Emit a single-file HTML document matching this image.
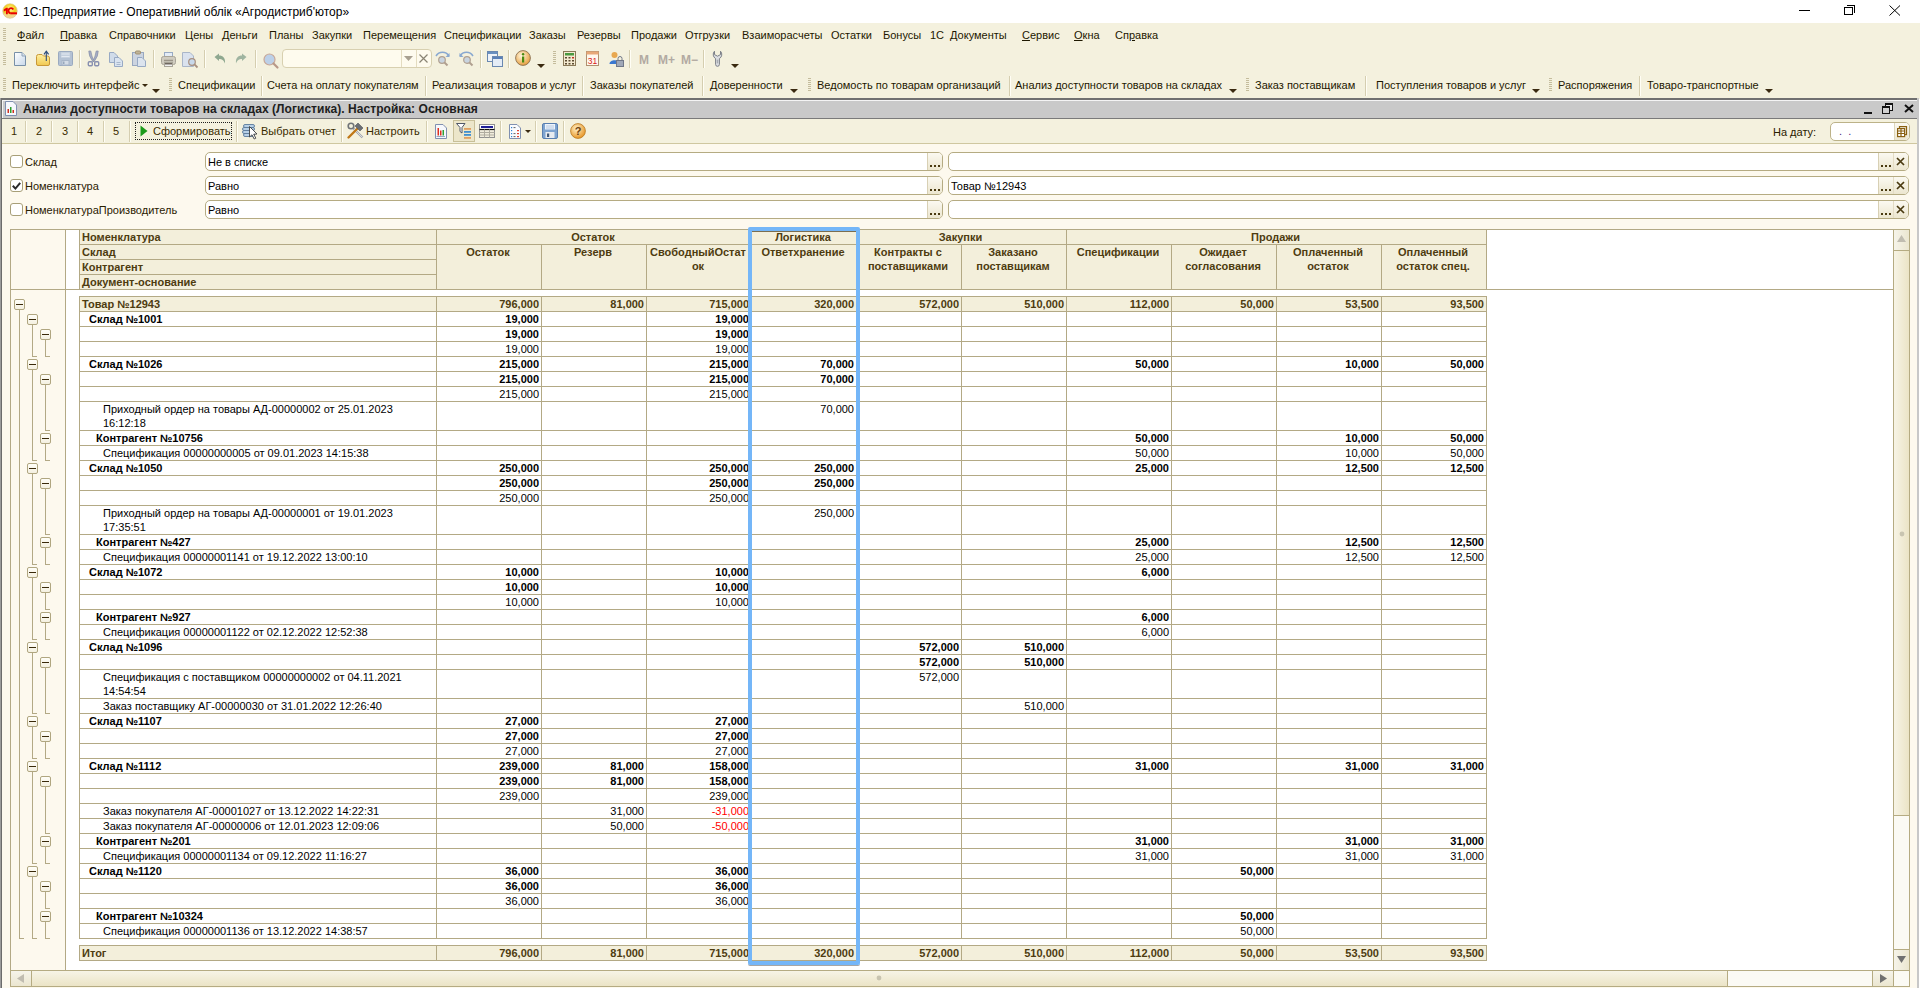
<!DOCTYPE html><html><head><meta charset="utf-8"><style>
html,body{margin:0;padding:0}
body{width:1920px;height:988px;overflow:hidden;position:relative;background:#fff;font-family:'Liberation Sans', sans-serif;}
.t{position:absolute;white-space:pre;font-family:'Liberation Sans', sans-serif;}
.b{position:absolute;box-sizing:border-box;}
svg{position:absolute;overflow:visible}

</style></head><body>
<div class="b" style="left:0px;top:0px;width:1920px;height:23px;background:#fff"></div>
<svg style="left:2px;top:3px" width="16" height="16" viewBox="0 0 16 16"><defs><radialGradient id="g1" cx="50%" cy="35%" r="60%"><stop offset="0" stop-color="#fff9a0"/><stop offset="0.6" stop-color="#f2cc1a"/><stop offset="1" stop-color="#e8c070"/></radialGradient></defs><circle cx="8" cy="8" r="7.3" fill="url(#g1)" stroke="#d8c890" stroke-width="0.6"/><path d="M1.5 10.5 A7 7 0 0 0 14.5 10.5Z" fill="#f4e0b0" opacity="0.6"/><path d="M1.8 6.4 L4.4 4.8 H5.8 V11.2 H4 V7.4 L1.8 8.4Z" fill="#e80000"/><path d="M11.3 6.4 A2.6 2.6 0 1 0 8.8 10.3" stroke="#e80000" stroke-width="1.9" fill="none"/><rect x="8.6" y="9.3" width="6.4" height="2" fill="#e80000"/></svg>
<div class="t" style="left:23px;top:5px;font-size:12px;line-height:15px;color:#000;">1С:Предприятие - Оперативний облік «Агродистриб&#x27;ютор»</div>
<div class="b" style="left:1799px;top:10px;width:11px;height:1px;background:#000"></div>
<div class="b" style="left:1844px;top:7px;width:9px;height:8px;border:1px solid #000;background:#fff"></div>
<div class="b" style="left:1847px;top:5px;width:8px;height:8px;border-top:1px solid #000;border-right:1px solid #000"></div>
<svg style="left:1889px;top:5px" width="12" height="11" viewBox="0 0 12 11"><path d="M0.5 0.5 L11 10.5 M11 0.5 L0.5 10.5" stroke="#000" stroke-width="1" fill="none"/></svg>
<div class="b" style="left:0px;top:23px;width:1920px;height:76px;background:#f4f1de"></div>
<div class="b" style="left:3px;top:28px;width:3px;height:14px;background:repeating-linear-gradient(to bottom,#c4bc9c 0 1px,transparent 1px 2px)"></div>
<div class="t" style="left:17px;top:28px;font-size:11px;line-height:15px;color:#1e1800"><u>Ф</u>айл</div>
<div class="t" style="left:60px;top:28px;font-size:11px;line-height:15px;color:#1e1800"><u>П</u>равка</div>
<div class="t" style="left:109px;top:28px;font-size:11px;line-height:15px;color:#1e1800;">Справочники</div>
<div class="t" style="left:185px;top:28px;font-size:11px;line-height:15px;color:#1e1800;">Цены</div>
<div class="t" style="left:222px;top:28px;font-size:11px;line-height:15px;color:#1e1800"><u>Д</u>еньги</div>
<div class="t" style="left:269px;top:28px;font-size:11px;line-height:15px;color:#1e1800;">Планы</div>
<div class="t" style="left:312px;top:28px;font-size:11px;line-height:15px;color:#1e1800;">Закупки</div>
<div class="t" style="left:363px;top:28px;font-size:11px;line-height:15px;color:#1e1800;">Перемещения</div>
<div class="t" style="left:444px;top:28px;font-size:11px;line-height:15px;color:#1e1800;">Спецификации</div>
<div class="t" style="left:529px;top:28px;font-size:11px;line-height:15px;color:#1e1800;">Заказы</div>
<div class="t" style="left:577px;top:28px;font-size:11px;line-height:15px;color:#1e1800;">Резервы</div>
<div class="t" style="left:631px;top:28px;font-size:11px;line-height:15px;color:#1e1800;">Продажи</div>
<div class="t" style="left:685px;top:28px;font-size:11px;line-height:15px;color:#1e1800;">Отгрузки</div>
<div class="t" style="left:742px;top:28px;font-size:11px;line-height:15px;color:#1e1800;">Взаиморасчеты</div>
<div class="t" style="left:831px;top:28px;font-size:11px;line-height:15px;color:#1e1800;">Остатки</div>
<div class="t" style="left:883px;top:28px;font-size:11px;line-height:15px;color:#1e1800;">Бонусы</div>
<div class="t" style="left:930px;top:28px;font-size:11px;line-height:15px;color:#1e1800;">1С</div>
<div class="t" style="left:950px;top:28px;font-size:11px;line-height:15px;color:#1e1800"><u>Д</u>окументы</div>
<div class="t" style="left:1022px;top:28px;font-size:11px;line-height:15px;color:#1e1800"><u>С</u>ервис</div>
<div class="t" style="left:1074px;top:28px;font-size:11px;line-height:15px;color:#1e1800"><u>О</u>кна</div>
<div class="t" style="left:1115px;top:28px;font-size:11px;line-height:15px;color:#1e1800">Сп<u>р</u>авка</div>
<div class="b" style="left:3px;top:52px;width:3px;height:13px;background:repeating-linear-gradient(to bottom,#c4bc9c 0 1px,transparent 1px 2px)"></div>
<svg style="left:13px;top:51px" width="15" height="16" viewBox="0 0 15 16"><defs><linearGradient id="gd" x1="0" y1="0" x2="1" y2="1"><stop offset="0" stop-color="#ffffff"/><stop offset="1" stop-color="#c8d8ea"/></linearGradient></defs><path d="M1.5 1.5 H9 L12.5 5 V14.5 H1.5Z" fill="url(#gd)" stroke="#7890a8"/><path d="M9 1.5 V5 H12.5" fill="#d8e2ee" stroke="#90a4b8"/></svg>
<svg style="left:35px;top:50px" width="16" height="17" viewBox="0 0 16 17"><defs><linearGradient id="gf" x1="0" y1="0" x2="0" y2="1"><stop offset="0" stop-color="#fff0a0"/><stop offset="1" stop-color="#f0c850"/></linearGradient></defs><path d="M1.5 6.5 Q1.5 4.5 3.5 4.5 H7 L8.5 6 H12.5 Q14.5 6 14.5 8 V14 Q14.5 15.5 13 15.5 H3 Q1.5 15.5 1.5 14Z" fill="url(#gf)" stroke="#c89838"/><path d="M11.3 11 V2" stroke="#2a4a7a" stroke-width="1.1"/><path d="M9 4.3 L11.3 1.2 L13.6 4.3" stroke="#2a4a7a" stroke-width="1.2" fill="none"/></svg>
<svg style="left:57px;top:50px" width="17" height="17" viewBox="0 0 17 17"><rect x="1.5" y="1.5" width="14" height="14" rx="1" fill="#b4c2d4" stroke="#9aaac0"/><rect x="4" y="2" width="9" height="6" fill="#c4d0de"/><path d="M4.5 4 H12.5 M4.5 6.5 H12.5" stroke="#e4eaf2"/><rect x="5" y="10.5" width="7" height="4.5" fill="#d4dce6" stroke="#a8b6c8"/><rect x="6" y="11.5" width="1.5" height="2.5" fill="#98a8bc"/></svg>
<div class="b" style="left:79px;top:50px;width:1px;height:18px;background:#d5ceb0;box-shadow:1px 0 0 #fffef5"></div>
<svg style="left:87px;top:50px" width="13" height="17" viewBox="0 0 13 17"><path d="M1.8 1 Q1.5 6 5.8 11.5 L7.2 11.5 Q4.5 6 3.8 1Z M11.2 1 Q11.5 6 7.2 11.5 L5.8 11.5 Q8.5 6 9.2 1Z" fill="#a4acc4" stroke="#8890a8" stroke-width="0.7"/><rect x="1.3" y="11.8" width="4" height="4" rx="1" fill="none" stroke="#8890b0" stroke-width="1.4"/><rect x="7.7" y="11.8" width="4" height="4" rx="1" fill="none" stroke="#8890b0" stroke-width="1.4"/></svg>
<svg style="left:108px;top:51px" width="17" height="16" viewBox="0 0 17 16"><path d="M1.5 1.5 H6 L9.5 5 V11.5 H1.5Z" fill="#d0dcea" stroke="#98aac4"/><path d="M6.5 6.5 H11 L14.5 10 V15.5 H6.5Z" fill="#dae4f0" stroke="#98aac4"/><path d="M8.5 11.5 H12.5 M8.5 13.5 H12.5" stroke="#a8b8cc"/></svg>
<svg style="left:131px;top:50px" width="17" height="17" viewBox="0 0 17 17"><rect x="1.5" y="2.5" width="11" height="13" fill="#ccd4e0" stroke="#98a8c0"/><rect x="4.5" y="1" width="5" height="3" rx="1" fill="#c0b498" stroke="#a09070"/><path d="M6.5 7.5 H11 L14.5 11 V16.5 H6.5Z" fill="#dce4ee" stroke="#98aac4"/></svg>
<div class="b" style="left:153px;top:50px;width:1px;height:18px;background:#d5ceb0;box-shadow:1px 0 0 #fffef5"></div>
<svg style="left:160px;top:51px" width="17" height="17" viewBox="0 0 17 17"><rect x="4.5" y="1.5" width="8" height="5" fill="#e4ecf6" stroke="#98aac4"/><rect x="1.5" y="5.5" width="14" height="8" rx="2" fill="#d0ccc0" stroke="#a8a498"/><path d="M4 9.5 H13" stroke="#9a9488" stroke-width="1.5"/><rect x="4.5" y="11.5" width="8" height="4" fill="#f0f0f0" stroke="#a8a498"/><rect x="5" y="12" width="7" height="1.5" fill="#706860"/></svg>
<svg style="left:182px;top:52px" width="17" height="16" viewBox="0 0 17 16"><path d="M0.5 0.5 H8 L11.5 4 V14.5 H0.5Z" fill="#dae2ee" stroke="#aab6c8"/><circle cx="10" cy="10" r="3.3" fill="#c8d8ea" stroke="#a89080" stroke-width="1.2"/><path d="M12.2 12.2 L15.5 15.5" stroke="#a89080" stroke-width="1.8"/></svg>
<div class="b" style="left:204px;top:50px;width:1px;height:18px;background:#d5ceb0;box-shadow:1px 0 0 #fffef5"></div>
<svg style="left:214px;top:53px" width="12" height="11" viewBox="0 0 12 11"><path d="M0.5 4 L5 0.5 V2.6 C9 2.6 11.5 5 11 10.5 C9.5 7 8 6 5 6 V8 Z" fill="#8fa890"/></svg>
<svg style="left:235px;top:53px" width="12" height="11" viewBox="0 0 12 11"><path d="M11.5 4 L7 0.5 V2.6 C3 2.6 0.5 5 1 10.5 C2.5 7 4 6 7 6 V8 Z" fill="#9fb4a0"/></svg>
<div class="b" style="left:255px;top:50px;width:1px;height:18px;background:#d5ceb0;box-shadow:1px 0 0 #fffef5"></div>
<svg style="left:263px;top:53px" width="16" height="15" viewBox="0 0 16 15"><circle cx="6.5" cy="6.5" r="5.5" fill="#bcd0e8" stroke="#c8a898" stroke-width="1.2"/><path d="M10.5 10.5 L14.5 14.5" stroke="#b89888" stroke-width="2.2" stroke-linecap="round"/></svg>
<div class="b" style="left:282px;top:49px;width:150px;height:19px;border:1px solid #d8d0b0;border-radius:4px;background:#fefbee"></div>
<div class="b" style="left:401px;top:50px;width:1px;height:17px;background:#e4dcc0"></div>
<div class="b" style="left:416px;top:50px;width:1px;height:17px;background:#e4dcc0"></div>
<svg style="left:404px;top:56px" width="9" height="5" viewBox="0 0 9 5"><path d="M0 0 H9 L4.5 5Z" fill="#a8a090"/></svg>
<svg style="left:419px;top:54px" width="9" height="9" viewBox="0 0 9 9"><path d="M0.5 0.5 L8.5 8.5 M8.5 0.5 L0.5 8.5" stroke="#8a8474" stroke-width="1.2"/></svg>
<svg style="left:435px;top:51px" width="16" height="16" viewBox="0 0 16 16"><path d="M1 5 C4 0 11 0 14 5" stroke="#88a8d0" stroke-width="1.5" fill="none"/><path d="M14.5 2 V6 H10.5" fill="#88a8d0"/><circle cx="7" cy="9" r="3.3" fill="#c8d4e0" stroke="#b0a090" stroke-width="1.2"/><path d="M9.5 11.5 L12.5 14.5" stroke="#b0a090" stroke-width="2"/></svg>
<svg style="left:459px;top:51px" width="16" height="16" viewBox="0 0 16 16"><path d="M1 5 C4 0 11 0 14 5" stroke="#88a8d0" stroke-width="1.5" fill="none"/><path d="M0.5 2 V6 H4.5" fill="#88a8d0"/><circle cx="8" cy="9" r="3.3" fill="#c8d4e0" stroke="#b0a090" stroke-width="1.2"/><path d="M10.5 11.5 L13.5 14.5" stroke="#b0a090" stroke-width="2"/></svg>
<div class="b" style="left:480px;top:50px;width:1px;height:18px;background:#d5ceb0;box-shadow:1px 0 0 #fffef5"></div>
<svg style="left:487px;top:51px" width="16" height="16" viewBox="0 0 16 16"><rect x="0.5" y="0.5" width="10" height="10" fill="#eef2f8" stroke="#6a88b0"/><rect x="1" y="1" width="9" height="2" fill="#6a90c0"/><rect x="5.5" y="5.5" width="10" height="10" fill="#e4ecf6" stroke="#6a88b0"/><rect x="6" y="6" width="9" height="2" fill="#5a80b8"/></svg>
<div class="b" style="left:508px;top:50px;width:1px;height:18px;background:#d5ceb0;box-shadow:1px 0 0 #fffef5"></div>
<svg style="left:515px;top:50px" width="16" height="16" viewBox="0 0 16 16"><defs><radialGradient id="gi" cx="40%" cy="35%" r="65%"><stop offset="0" stop-color="#fff8e0"/><stop offset="1" stop-color="#e8a040"/></radialGradient></defs><circle cx="8" cy="8" r="7.4" fill="url(#gi)" stroke="#8a7050" stroke-width="0.9"/><rect x="7" y="6.5" width="2.2" height="6" fill="#4a8a10"/><circle cx="8.1" cy="4.3" r="1.2" fill="#4a8a10"/></svg>
<svg style="left:537px;top:64px" width="8" height="4" viewBox="0 0 8 4"><path d="M0 0 H8 L4 4Z" fill="#3a2a10"/></svg>
<div class="b" style="left:553px;top:51px;width:3px;height:14px;background:repeating-linear-gradient(to bottom,#c4bc9c 0 1px,transparent 1px 2px)"></div>
<svg style="left:563px;top:51px" width="13" height="15" viewBox="0 0 13 15"><rect x="0.5" y="0.5" width="12" height="14" fill="#f4ead0" stroke="#8a7a58"/><rect x="2" y="2" width="9" height="2.5" fill="#4a9a40"/><g fill="#5a4a30"><rect x="2" y="6" width="2" height="1.5"/><rect x="5.5" y="6" width="2" height="1.5"/><rect x="9" y="6" width="2" height="1.5" fill="#c03020"/><rect x="2" y="9" width="2" height="1.5"/><rect x="5.5" y="9" width="2" height="1.5"/><rect x="9" y="9" width="2" height="1.5"/><rect x="2" y="12" width="2" height="1.5"/><rect x="5.5" y="12" width="2" height="1.5"/><rect x="9" y="12" width="2" height="1.5"/></g></svg>
<svg style="left:586px;top:51px" width="13" height="15" viewBox="0 0 13 15"><rect x="0.5" y="0.5" width="12" height="14" fill="#fff8ee" stroke="#b09070"/><rect x="0.5" y="0.5" width="12" height="3" fill="#e8a878"/><text x="6.5" y="13" font-family="Liberation Sans" font-size="8.5" fill="#d82020" text-anchor="middle">31</text></svg>
<svg style="left:609px;top:51px" width="15" height="16" viewBox="0 0 15 16"><circle cx="5.5" cy="4" r="3" fill="#e8a850"/><path d="M0.5 13 C0.5 8 10.5 8 10.5 13Z" fill="#3a78d0"/><rect x="7.5" y="9.5" width="7" height="6" fill="#a0a8b8" stroke="#707888"/><path d="M9 9.5 V7.5 A2 2 0 0 1 13 7.5 V9.5" stroke="#707888" fill="none"/></svg>
<div class="b" style="left:629px;top:50px;width:1px;height:18px;background:#d5ceb0;box-shadow:1px 0 0 #fffef5"></div>
<div class="t" style="left:639px;top:53px;font-size:12px;line-height:15px;font-weight:bold;color:#b2aaa2;">M</div>
<div class="t" style="left:658px;top:53px;font-size:12px;line-height:15px;font-weight:bold;color:#b2aaa2;">M+</div>
<div class="t" style="left:681px;top:53px;font-size:12px;line-height:15px;font-weight:bold;color:#b2aaa2;">M−</div>
<div class="b" style="left:703px;top:50px;width:1px;height:18px;background:#d5ceb0;box-shadow:1px 0 0 #fffef5"></div>
<svg style="left:712px;top:50px" width="11" height="17" viewBox="0 0 11 17"><path d="M2.5 1.2 V4.6 L5.5 6.2 L8.5 4.6 V1.2 A4.8 4.8 0 0 1 7.4 8.6 V14.4 A1.9 1.9 0 0 1 3.6 14.4 V8.6 A4.8 4.8 0 0 1 2.5 1.2Z" fill="#dcdee2" stroke="#7c8088" stroke-width="1"/><rect x="4.8" y="9.5" width="1.4" height="4" rx="0.7" fill="#a8acb2"/></svg>
<svg style="left:731px;top:64px" width="8" height="4" viewBox="0 0 8 4"><path d="M0 0 H8 L4 4Z" fill="#3a2a10"/></svg>
<div class="b" style="left:3px;top:78px;width:3px;height:13px;background:repeating-linear-gradient(to bottom,#c4bc9c 0 1px,transparent 1px 2px)"></div>
<div class="t" style="left:12px;top:78px;font-size:11px;line-height:15px;color:#1e1800;">Переключить интерфейс</div>
<svg style="left:142px;top:84px" width="6" height="3" viewBox="0 0 6 3"><path d="M0 0 H6 L3 3Z" fill="#3a2a10"/></svg>
<svg style="left:152px;top:89px" width="8" height="4" viewBox="0 0 8 4"><path d="M0 0 H8 L4 4Z" fill="#3a2a10"/></svg>
<div class="b" style="left:169px;top:78px;width:3px;height:13px;background:repeating-linear-gradient(to bottom,#c4bc9c 0 1px,transparent 1px 2px)"></div>
<div class="t" style="left:178px;top:78px;font-size:11px;line-height:15px;color:#1e1800;">Спецификации</div>
<div class="b" style="left:261px;top:76px;width:1px;height:20px;background:#d5ceb0;box-shadow:1px 0 0 #fffef5"></div>
<div class="t" style="left:267px;top:78px;font-size:11px;line-height:15px;color:#1e1800;">Счета на оплату покупателям</div>
<div class="b" style="left:425px;top:76px;width:1px;height:20px;background:#d5ceb0;box-shadow:1px 0 0 #fffef5"></div>
<div class="t" style="left:432px;top:78px;font-size:11px;line-height:15px;color:#1e1800;">Реализация товаров и услуг</div>
<div class="b" style="left:582px;top:76px;width:1px;height:20px;background:#d5ceb0;box-shadow:1px 0 0 #fffef5"></div>
<div class="t" style="left:590px;top:78px;font-size:11px;line-height:15px;color:#1e1800;">Заказы покупателей</div>
<div class="b" style="left:702px;top:76px;width:1px;height:20px;background:#d5ceb0;box-shadow:1px 0 0 #fffef5"></div>
<div class="t" style="left:710px;top:78px;font-size:11px;line-height:15px;color:#1e1800;">Доверенности</div>
<div class="t" style="left:817px;top:78px;font-size:11px;line-height:15px;color:#1e1800;">Ведомость по товарам организаций</div>
<div class="b" style="left:1009px;top:76px;width:1px;height:20px;background:#d5ceb0;box-shadow:1px 0 0 #fffef5"></div>
<div class="t" style="left:1015px;top:78px;font-size:11px;line-height:15px;color:#1e1800;">Анализ доступности товаров на складах</div>
<div class="t" style="left:1255px;top:78px;font-size:11px;line-height:15px;color:#1e1800;">Заказ поставщикам</div>
<div class="b" style="left:1365px;top:76px;width:1px;height:20px;background:#d5ceb0;box-shadow:1px 0 0 #fffef5"></div>
<div class="t" style="left:1376px;top:78px;font-size:11px;line-height:15px;color:#1e1800;">Поступления товаров и услуг</div>
<div class="t" style="left:1558px;top:78px;font-size:11px;line-height:15px;color:#1e1800;">Распоряжения</div>
<div class="b" style="left:1639px;top:76px;width:1px;height:20px;background:#d5ceb0;box-shadow:1px 0 0 #fffef5"></div>
<div class="t" style="left:1647px;top:78px;font-size:11px;line-height:15px;color:#1e1800;">Товаро-транспортные</div>
<svg style="left:790px;top:89px" width="8" height="4" viewBox="0 0 8 4"><path d="M0 0 H8 L4 4Z" fill="#3a2a10"/></svg>
<svg style="left:1229px;top:89px" width="8" height="4" viewBox="0 0 8 4"><path d="M0 0 H8 L4 4Z" fill="#3a2a10"/></svg>
<svg style="left:1532px;top:89px" width="8" height="4" viewBox="0 0 8 4"><path d="M0 0 H8 L4 4Z" fill="#3a2a10"/></svg>
<svg style="left:1765px;top:89px" width="8" height="4" viewBox="0 0 8 4"><path d="M0 0 H8 L4 4Z" fill="#3a2a10"/></svg>
<div class="b" style="left:808px;top:78px;width:3px;height:13px;background:repeating-linear-gradient(to bottom,#c4bc9c 0 1px,transparent 1px 2px)"></div>
<div class="b" style="left:1246px;top:78px;width:3px;height:13px;background:repeating-linear-gradient(to bottom,#c4bc9c 0 1px,transparent 1px 2px)"></div>
<div class="b" style="left:1549px;top:78px;width:3px;height:13px;background:repeating-linear-gradient(to bottom,#c4bc9c 0 1px,transparent 1px 2px)"></div>
<div class="b" style="left:0px;top:98px;width:1919px;height:2px;background:#707070"></div>
<div class="b" style="left:0px;top:98px;width:2px;height:890px;background:linear-gradient(90deg,#9c9c9c 50%,#6c6c6c 50%)"></div>
<div class="b" style="left:2px;top:119px;width:1px;height:869px;background:#fffef8"></div>
<div class="b" style="left:1917px;top:98px;width:2px;height:890px;background:#c8c8c8"></div>
<div class="b" style="left:2px;top:100px;width:1915px;height:18px;background:#c9c9c9"></div>
<div class="b" style="left:2px;top:100px;width:1915px;height:1px;background:#f4f4f4"></div>
<div class="b" style="left:2px;top:100px;width:1px;height:18px;background:#f4f4f4"></div>
<div class="b" style="left:2px;top:118px;width:1915px;height:1px;background:#7a7a7a"></div>
<svg style="left:5px;top:101px" width="12" height="15" viewBox="0 0 12 15"><path d="M0.5 0.5 H8 L11.5 4 V14.5 H0.5Z" fill="#f6f8fc" stroke="#8090b0"/><rect x="2.5" y="8" width="1.5" height="4" fill="#d03020"/><rect x="5" y="6" width="1.5" height="6" fill="#30a030"/><rect x="7.5" y="9" width="1.5" height="3" fill="#d03020"/></svg>
<div class="t" style="left:23px;top:102px;font-size:12px;line-height:15px;font-weight:bold;color:#202020;letter-spacing:0.05px">Анализ доступности товаров на складах (Логистика). Настройка: Основная</div>
<div class="b" style="left:1864px;top:112px;width:8px;height:2px;background:#111"></div>
<div class="b" style="left:1885px;top:103px;width:8px;height:8px;border:1.5px solid #111;border-top-width:2px;background:#e8e8e8"></div>
<div class="b" style="left:1882px;top:106px;width:8px;height:8px;border:1.5px solid #111;border-top-width:2px;background:#d0d0d0"></div>
<svg style="left:1904px;top:104px" width="10" height="9" viewBox="0 0 10 9"><path d="M1 1 L9 8 M9 1 L1 8" stroke="#111" stroke-width="2"/></svg>
<div class="b" style="left:2px;top:119px;width:1915px;height:24px;background:#f4f1de"></div>
<div class="b" style="left:2px;top:143px;width:1915px;height:1px;background:#cfc7a0"></div>
<div class="t" style="left:11px;top:124px;font-size:11px;line-height:15px;color:#3a2c00;">1</div>
<div class="t" style="left:36px;top:124px;font-size:11px;line-height:15px;color:#3a2c00;">2</div>
<div class="t" style="left:62px;top:124px;font-size:11px;line-height:15px;color:#3a2c00;">3</div>
<div class="t" style="left:87px;top:124px;font-size:11px;line-height:15px;color:#3a2c00;">4</div>
<div class="t" style="left:113px;top:124px;font-size:11px;line-height:15px;color:#3a2c00;">5</div>
<div class="b" style="left:25px;top:121px;width:1px;height:21px;background:#d5ceb0;box-shadow:1px 0 0 #fffef5"></div>
<div class="b" style="left:51px;top:121px;width:1px;height:21px;background:#d5ceb0;box-shadow:1px 0 0 #fffef5"></div>
<div class="b" style="left:77px;top:121px;width:1px;height:21px;background:#d5ceb0;box-shadow:1px 0 0 #fffef5"></div>
<div class="b" style="left:103px;top:121px;width:1px;height:21px;background:#d5ceb0;box-shadow:1px 0 0 #fffef5"></div>
<div class="b" style="left:129px;top:121px;width:1px;height:21px;background:#d5ceb0;box-shadow:1px 0 0 #fffef5"></div>
<div class="b" style="left:135px;top:122px;width:97px;height:18px;border:1px dotted #202020"></div>
<svg style="left:140px;top:125px" width="8" height="12" viewBox="0 0 8 12"><path d="M0.5 0.5 L7.5 6 L0.5 11.5Z" fill="#1a9a1a"/></svg>
<div class="t" style="left:153px;top:124px;font-size:11px;line-height:15px;color:#3a2c00;">Сформировать</div>
<div class="b" style="left:236px;top:121px;width:1px;height:21px;background:#d5ceb0;box-shadow:1px 0 0 #fffef5"></div>
<svg style="left:242px;top:123px" width="17" height="17" viewBox="0 0 17 17"><g fill="#b8d0e6" stroke="#5a7a9c" stroke-width="0.9"><rect x="1.5" y="1.5" width="11" height="3" rx="1.5"/><rect x="0.5" y="4.5" width="12" height="3" rx="1.5"/><rect x="0.5" y="7.5" width="12" height="3" rx="1.5"/><rect x="1.5" y="10.5" width="11" height="3" rx="1.5"/></g><path d="M7.5 3.5 V14 L10 11.8 L12.2 16 L13.8 15.2 L11.7 11.2 L15 11Z" fill="#fff" stroke="#404040" stroke-width="0.9"/></svg>
<div class="t" style="left:261px;top:124px;font-size:11px;line-height:15px;color:#3a2c00;">Выбрать отчет</div>
<div class="b" style="left:341px;top:121px;width:1px;height:21px;background:#d5ceb0;box-shadow:1px 0 0 #fffef5"></div>
<svg style="left:347px;top:122px" width="17" height="17" viewBox="0 0 17 17"><path d="M6 6 L15.5 15.5" stroke="#a0a4ac" stroke-width="2.2"/><path d="M6 6 L15.5 15.5" stroke="#e8eaee" stroke-width="0.8"/><circle cx="4" cy="4" r="2.8" fill="none" stroke="#707478" stroke-width="1.6"/><path d="M1.5 15.5 L11 6" stroke="#c07818" stroke-width="2.4" stroke-linecap="round"/><path d="M8 4 L11 1 L16 6 L13 9Z" fill="#6a6e74" stroke="#505458" stroke-width="0.6"/></svg>
<div class="t" style="left:366px;top:124px;font-size:11px;line-height:15px;color:#3a2c00;">Настроить</div>
<div class="b" style="left:426px;top:121px;width:1px;height:21px;background:#d5ceb0;box-shadow:1px 0 0 #fffef5"></div>
<svg style="left:435px;top:124px" width="12" height="15" viewBox="0 0 12 15"><path d="M0.5 0.5 H8 L11.5 4 V14.5 H0.5Z" fill="#f6f8fc" stroke="#8090b0"/><rect x="2.5" y="4" width="1.5" height="7.5" fill="#e03020"/><rect x="5" y="6.5" width="1.5" height="5" fill="#e03020"/><rect x="7.5" y="6" width="1.5" height="5.5" fill="#30a030"/><path d="M1.5 12.5 H10" stroke="#98a8c0"/></svg>
<div class="b" style="left:453px;top:120px;width:22px;height:22px;border:1px solid #c8bf98;background:#ece6ca"></div>
<svg style="left:456px;top:123px" width="16" height="16" viewBox="0 0 16 16"><path d="M0.5 0.5 H9 L6 4.5 V10 L4 8.5 V4.5Z" fill="#fff" stroke="#505868"/><rect x="8" y="5" width="7" height="1.8" fill="#e0a060"/><rect x="8" y="8" width="7" height="1.8" fill="#4090d0"/><rect x="8" y="11" width="7" height="1.8" fill="#4090d0"/><rect x="8" y="14" width="7" height="1.8" fill="#e0a060"/></svg>
<svg style="left:479px;top:124px" width="16" height="14" viewBox="0 0 16 14"><rect x="0.5" y="0.5" width="15" height="13" fill="#f0ecdc" stroke="#909090"/><rect x="1" y="1" width="14" height="4" fill="#fff"/><rect x="2" y="2" width="12" height="2" fill="#202098"/><path d="M0.5 5.5 H15.5" stroke="#101010" stroke-width="1.2"/><path d="M0.5 8.5 H15.5 M0.5 11 H15.5 M5.5 5.5 V13.5 M10.5 5.5 V13.5" stroke="#b0aca0"/></svg>
<div class="b" style="left:500px;top:121px;width:1px;height:21px;background:#d5ceb0;box-shadow:1px 0 0 #fffef5"></div>
<svg style="left:509px;top:124px" width="12" height="15" viewBox="0 0 12 15"><path d="M0.5 0.5 H8 L11.5 4 V14.5 H0.5Z" fill="#fafcff" stroke="#8090b0"/><g fill="#3080d0"><rect x="2" y="3" width="1.2" height="1.2"/><rect x="2" y="6" width="1.2" height="1.2"/><rect x="2" y="9" width="1.2" height="1.2"/><rect x="2" y="12" width="1.2" height="1.2"/></g><g fill="#e04030"><rect x="8" y="6" width="2" height="1.2"/><rect x="8" y="9" width="2" height="1.2"/><rect x="8" y="12" width="2" height="1.2"/></g><path d="M4.5 3.6 H6.5 M4.5 9.6 H6.5 M4.5 12.6 H6.5" stroke="#606060"/></svg>
<svg style="left:525px;top:130px" width="6" height="3" viewBox="0 0 6 3"><path d="M0 0 H6 L3 3Z" fill="#3a2a10"/></svg>
<div class="b" style="left:535px;top:121px;width:1px;height:21px;background:#d5ceb0;box-shadow:1px 0 0 #fffef5"></div>
<svg style="left:542px;top:123px" width="16" height="16" viewBox="0 0 16 16"><rect x="0.5" y="0.5" width="15" height="15" rx="1.5" fill="#7ea4d0" stroke="#5a80b0"/><rect x="3" y="1" width="10" height="5.5" fill="#eef4fa"/><path d="M4 3 H12 M4 5 H12" stroke="#a8c0dc" stroke-width="0.8"/><rect x="3.5" y="9" width="9" height="6" fill="#e8ecf0"/><rect x="5" y="10.5" width="2.2" height="3.5" fill="#405878"/></svg>
<div class="b" style="left:563px;top:121px;width:1px;height:21px;background:#d5ceb0;box-shadow:1px 0 0 #fffef5"></div>
<svg style="left:570px;top:123px" width="16" height="16" viewBox="0 0 16 16"><defs><radialGradient id="gh" cx="40%" cy="35%" r="65%"><stop offset="0" stop-color="#fff0c8"/><stop offset="1" stop-color="#e8982a"/></radialGradient></defs><circle cx="8" cy="8" r="7.4" fill="url(#gh)" stroke="#b87820" stroke-width="0.8"/><text x="8" y="12.3" font-family="Liberation Sans" font-weight="bold" font-size="11" fill="#6a4010" text-anchor="middle">?</text></svg>
<div class="t" style="left:1773px;top:125px;font-size:11px;line-height:15px;color:#2a2000;">На дату:</div>
<div class="b" style="left:1830px;top:122px;width:80px;height:19px;border:1px solid #bcb288;border-radius:5px;background:#fff"></div>
<div class="b" style="left:1894px;top:123px;width:15px;height:17px;background:linear-gradient(#faf8f0,#ece6d0);border-left:1px solid #ddd6bc;border-radius:0 4px 4px 0"></div>
<svg style="left:1897px;top:126px" width="10" height="11" viewBox="0 0 10 11"><g fill="none" stroke="#8a6010" stroke-width="1.2"><rect x="2.5" y="0.6" width="7" height="8"/><rect x="0.6" y="2.6" width="7" height="8" fill="#fff"/><path d="M0.6 5 H7.6 M0.6 7.5 H7.6 M4 2.6 V10.6"/></g></svg>
<div class="t" style="left:1839px;top:124px;font-size:11px;line-height:15px;color:#4a2a80;">.  .</div>
<div class="b" style="left:2px;top:144px;width:1915px;height:844px;background:#fdf9ee"></div>
<div class="b" style="left:10px;top:155px;width:13px;height:13px;border:1px solid #a89f78;border-radius:3px;background:#fff"></div>
<div class="t" style="left:25px;top:155px;font-size:11px;line-height:15px;color:#2a2000;">Склад</div>
<div class="b" style="left:205px;top:152px;width:738px;height:19px;border:1px solid #b5ab82;border-radius:5px;background:#fff"></div>
<div class="b" style="left:927px;top:153px;width:15px;height:17px;background:linear-gradient(#fbf9f1,#ece6cf);border-left:1px solid #d8d0b4;border-radius:0 4px 4px 0"></div>
<svg style="left:930px;top:165px" width="10" height="3" viewBox="0 0 10 3"><rect x="0" y="0" width="2" height="2" fill="#4a3a10"/><rect x="4" y="0" width="2" height="2" fill="#4a3a10"/><rect x="8" y="0" width="2" height="2" fill="#4a3a10"/></svg>
<div class="t" style="left:208px;top:155px;font-size:11px;line-height:15px;color:#000;">Не в списке</div>
<div class="b" style="left:948px;top:152px;width:961px;height:19px;border:1px solid #b5ab82;border-radius:5px;background:#fff"></div>
<div class="b" style="left:1878px;top:153px;width:15px;height:17px;background:linear-gradient(#fbf9f1,#ece6cf);border-left:1px solid #d8d0b4"></div>
<div class="b" style="left:1893px;top:153px;width:15px;height:17px;background:linear-gradient(#fbf9f1,#ece6cf);border-left:1px solid #e4dcc4;border-radius:0 4px 4px 0"></div>
<svg style="left:1881px;top:165px" width="10" height="3" viewBox="0 0 10 3"><rect x="0" y="0" width="2" height="2" fill="#4a3a10"/><rect x="4" y="0" width="2" height="2" fill="#4a3a10"/><rect x="8" y="0" width="2" height="2" fill="#4a3a10"/></svg>
<svg style="left:1896px;top:157px" width="9" height="9" viewBox="0 0 9 9"><path d="M1 1 L8 8 M8 1 L1 8" stroke="#4a3a10" stroke-width="1.7"/></svg>
<div class="b" style="left:10px;top:179px;width:13px;height:13px;border:1px solid #a89f78;border-radius:3px;background:#fff"></div>
<svg style="left:12px;top:182px" width="9" height="8" viewBox="0 0 9 8"><path d="M0.8 3.8 L3.4 6.6 L8.2 0.8" stroke="#2a2a2a" stroke-width="2" fill="none"/></svg>
<div class="t" style="left:25px;top:179px;font-size:11px;line-height:15px;color:#2a2000;">Номенклатура</div>
<div class="b" style="left:205px;top:176px;width:738px;height:19px;border:1px solid #b5ab82;border-radius:5px;background:#fff"></div>
<div class="b" style="left:927px;top:177px;width:15px;height:17px;background:linear-gradient(#fbf9f1,#ece6cf);border-left:1px solid #d8d0b4;border-radius:0 4px 4px 0"></div>
<svg style="left:930px;top:189px" width="10" height="3" viewBox="0 0 10 3"><rect x="0" y="0" width="2" height="2" fill="#4a3a10"/><rect x="4" y="0" width="2" height="2" fill="#4a3a10"/><rect x="8" y="0" width="2" height="2" fill="#4a3a10"/></svg>
<div class="t" style="left:208px;top:179px;font-size:11px;line-height:15px;color:#000;">Равно</div>
<div class="b" style="left:948px;top:176px;width:961px;height:19px;border:1px solid #b5ab82;border-radius:5px;background:#fff"></div>
<div class="b" style="left:1878px;top:177px;width:15px;height:17px;background:linear-gradient(#fbf9f1,#ece6cf);border-left:1px solid #d8d0b4"></div>
<div class="b" style="left:1893px;top:177px;width:15px;height:17px;background:linear-gradient(#fbf9f1,#ece6cf);border-left:1px solid #e4dcc4;border-radius:0 4px 4px 0"></div>
<svg style="left:1881px;top:189px" width="10" height="3" viewBox="0 0 10 3"><rect x="0" y="0" width="2" height="2" fill="#4a3a10"/><rect x="4" y="0" width="2" height="2" fill="#4a3a10"/><rect x="8" y="0" width="2" height="2" fill="#4a3a10"/></svg>
<svg style="left:1896px;top:181px" width="9" height="9" viewBox="0 0 9 9"><path d="M1 1 L8 8 M8 1 L1 8" stroke="#4a3a10" stroke-width="1.7"/></svg>
<div class="b" style="left:10px;top:203px;width:13px;height:13px;border:1px solid #a89f78;border-radius:3px;background:#fff"></div>
<div class="t" style="left:25px;top:203px;font-size:11px;line-height:15px;color:#2a2000;">НоменклатураПроизводитель</div>
<div class="b" style="left:205px;top:200px;width:738px;height:19px;border:1px solid #b5ab82;border-radius:5px;background:#fff"></div>
<div class="b" style="left:927px;top:201px;width:15px;height:17px;background:linear-gradient(#fbf9f1,#ece6cf);border-left:1px solid #d8d0b4;border-radius:0 4px 4px 0"></div>
<svg style="left:930px;top:213px" width="10" height="3" viewBox="0 0 10 3"><rect x="0" y="0" width="2" height="2" fill="#4a3a10"/><rect x="4" y="0" width="2" height="2" fill="#4a3a10"/><rect x="8" y="0" width="2" height="2" fill="#4a3a10"/></svg>
<div class="t" style="left:208px;top:203px;font-size:11px;line-height:15px;color:#000;">Равно</div>
<div class="b" style="left:948px;top:200px;width:961px;height:19px;border:1px solid #b5ab82;border-radius:5px;background:#fff"></div>
<div class="b" style="left:1878px;top:201px;width:15px;height:17px;background:linear-gradient(#fbf9f1,#ece6cf);border-left:1px solid #d8d0b4"></div>
<div class="b" style="left:1893px;top:201px;width:15px;height:17px;background:linear-gradient(#fbf9f1,#ece6cf);border-left:1px solid #e4dcc4;border-radius:0 4px 4px 0"></div>
<svg style="left:1881px;top:213px" width="10" height="3" viewBox="0 0 10 3"><rect x="0" y="0" width="2" height="2" fill="#4a3a10"/><rect x="4" y="0" width="2" height="2" fill="#4a3a10"/><rect x="8" y="0" width="2" height="2" fill="#4a3a10"/></svg>
<svg style="left:1896px;top:205px" width="9" height="9" viewBox="0 0 9 9"><path d="M1 1 L8 8 M8 1 L1 8" stroke="#4a3a10" stroke-width="1.7"/></svg>
<div class="t" style="left:951px;top:179px;font-size:11px;line-height:15px;color:#000;">Товар №12943</div>
<div class="b" style="left:10px;top:229px;width:1900px;height:758px;background:#fff"></div>
<div class="b" style="left:10px;top:229px;width:56px;height:742px;background:#fdf9ee"></div>
<div class="b" style="left:79px;top:229px;width:1408px;height:61px;background:#f3efdb"></div>
<div class="b" style="left:10px;top:229px;width:1884px;height:1px;background:#b3a985"></div>
<div class="b" style="left:10px;top:289px;width:1884px;height:1px;background:#b3a985"></div>
<div class="b" style="left:10px;top:229px;width:1px;height:758px;background:#b3a985"></div>
<div class="b" style="left:65px;top:229px;width:1px;height:742px;background:#b3a985"></div>
<div class="b" style="left:79px;top:229px;width:1px;height:61px;background:#b3a985"></div>
<div class="b" style="left:79px;top:244px;width:357px;height:1px;background:#b3a985"></div>
<div class="b" style="left:79px;top:259px;width:357px;height:1px;background:#b3a985"></div>
<div class="b" style="left:79px;top:274px;width:357px;height:1px;background:#b3a985"></div>
<div class="b" style="left:436px;top:244px;width:1050px;height:1px;background:#b3a985"></div>
<div class="b" style="left:436px;top:229px;width:1px;height:61px;background:#b3a985"></div>
<div class="b" style="left:541px;top:244px;width:1px;height:46px;background:#b3a985"></div>
<div class="b" style="left:646px;top:244px;width:1px;height:46px;background:#b3a985"></div>
<div class="b" style="left:751px;top:229px;width:1px;height:61px;background:#b3a985"></div>
<div class="b" style="left:856px;top:229px;width:1px;height:61px;background:#b3a985"></div>
<div class="b" style="left:961px;top:244px;width:1px;height:46px;background:#b3a985"></div>
<div class="b" style="left:1066px;top:229px;width:1px;height:61px;background:#b3a985"></div>
<div class="b" style="left:1171px;top:244px;width:1px;height:46px;background:#b3a985"></div>
<div class="b" style="left:1276px;top:244px;width:1px;height:46px;background:#b3a985"></div>
<div class="b" style="left:1381px;top:244px;width:1px;height:46px;background:#b3a985"></div>
<div class="b" style="left:1486px;top:229px;width:1px;height:61px;background:#b3a985"></div>
<div class="t" style="left:82px;top:230px;font-size:11px;line-height:15px;font-weight:bold;color:#4e3c10;">Номенклатура</div>
<div class="t" style="left:82px;top:245px;font-size:11px;line-height:15px;font-weight:bold;color:#4e3c10;">Склад</div>
<div class="t" style="left:82px;top:260px;font-size:11px;line-height:15px;font-weight:bold;color:#4e3c10;">Контрагент</div>
<div class="t" style="left:82px;top:275px;font-size:11px;line-height:15px;font-weight:bold;color:#4e3c10;">Документ-основание</div>
<div class="t" style="left:436px;top:230px;width:314px;text-align:center;font-size:11px;line-height:15px;font-weight:bold;color:#4e3c10">Остаток</div>
<div class="t" style="left:751px;top:230px;width:104px;text-align:center;font-size:11px;line-height:15px;font-weight:bold;color:#4e3c10">Логистика</div>
<div class="t" style="left:856px;top:230px;width:209px;text-align:center;font-size:11px;line-height:15px;font-weight:bold;color:#4e3c10">Закупки</div>
<div class="t" style="left:1066px;top:230px;width:419px;text-align:center;font-size:11px;line-height:15px;font-weight:bold;color:#4e3c10">Продажи</div>
<div class="t" style="left:436px;top:245px;width:104px;text-align:center;font-size:11px;line-height:14px;font-weight:bold;color:#4e3c10">Остаток</div>
<div class="t" style="left:541px;top:245px;width:104px;text-align:center;font-size:11px;line-height:14px;font-weight:bold;color:#4e3c10">Резерв</div>
<div class="t" style="left:646px;top:245px;width:104px;text-align:center;font-size:11px;line-height:14px;font-weight:bold;color:#4e3c10">СвободныйОстат<br>ок</div>
<div class="t" style="left:751px;top:245px;width:104px;text-align:center;font-size:11px;line-height:14px;font-weight:bold;color:#4e3c10">Ответхранение</div>
<div class="t" style="left:856px;top:245px;width:104px;text-align:center;font-size:11px;line-height:14px;font-weight:bold;color:#4e3c10">Контракты с<br>поставщиками</div>
<div class="t" style="left:961px;top:245px;width:104px;text-align:center;font-size:11px;line-height:14px;font-weight:bold;color:#4e3c10">Заказано<br>поставщикам</div>
<div class="t" style="left:1066px;top:245px;width:104px;text-align:center;font-size:11px;line-height:14px;font-weight:bold;color:#4e3c10">Спецификации</div>
<div class="t" style="left:1171px;top:245px;width:104px;text-align:center;font-size:11px;line-height:14px;font-weight:bold;color:#4e3c10">Ожидает<br>согласования</div>
<div class="t" style="left:1276px;top:245px;width:104px;text-align:center;font-size:11px;line-height:14px;font-weight:bold;color:#4e3c10">Оплаченный<br>остаток</div>
<div class="t" style="left:1381px;top:245px;width:104px;text-align:center;font-size:11px;line-height:14px;font-weight:bold;color:#4e3c10">Оплаченный<br>остаток спец.</div>
<div class="b" style="left:79px;top:296px;width:1408px;height:16px;background:#f3efdb"></div>
<div class="b" style="left:79px;top:296px;width:1408px;height:1px;background:#b3a985"></div>
<div class="b" style="left:79px;top:311px;width:1408px;height:1px;background:#b3a985"></div>
<div class="b" style="left:79px;top:296px;width:1px;height:16px;background:#b3a985"></div>
<div class="b" style="left:436px;top:296px;width:1px;height:16px;background:#b3a985"></div>
<div class="b" style="left:541px;top:296px;width:1px;height:16px;background:#b3a985"></div>
<div class="b" style="left:646px;top:296px;width:1px;height:16px;background:#b3a985"></div>
<div class="b" style="left:751px;top:296px;width:1px;height:16px;background:#b3a985"></div>
<div class="b" style="left:856px;top:296px;width:1px;height:16px;background:#b3a985"></div>
<div class="b" style="left:961px;top:296px;width:1px;height:16px;background:#b3a985"></div>
<div class="b" style="left:1066px;top:296px;width:1px;height:16px;background:#b3a985"></div>
<div class="b" style="left:1171px;top:296px;width:1px;height:16px;background:#b3a985"></div>
<div class="b" style="left:1276px;top:296px;width:1px;height:16px;background:#b3a985"></div>
<div class="b" style="left:1381px;top:296px;width:1px;height:16px;background:#b3a985"></div>
<div class="b" style="left:1486px;top:296px;width:1px;height:16px;background:#b3a985"></div>
<div class="t" style="left:82px;top:297px;font-size:11px;line-height:15px;font-weight:bold;color:#4e3c10;">Товар №12943</div>
<div class="t" style="left:437px;top:297px;width:102px;text-align:right;font-size:11px;line-height:15px;font-weight:bold;color:#4e3c10">796,000</div>
<div class="t" style="left:542px;top:297px;width:102px;text-align:right;font-size:11px;line-height:15px;font-weight:bold;color:#4e3c10">81,000</div>
<div class="t" style="left:647px;top:297px;width:102px;text-align:right;font-size:11px;line-height:15px;font-weight:bold;color:#4e3c10">715,000</div>
<div class="t" style="left:752px;top:297px;width:102px;text-align:right;font-size:11px;line-height:15px;font-weight:bold;color:#4e3c10">320,000</div>
<div class="t" style="left:857px;top:297px;width:102px;text-align:right;font-size:11px;line-height:15px;font-weight:bold;color:#4e3c10">572,000</div>
<div class="t" style="left:962px;top:297px;width:102px;text-align:right;font-size:11px;line-height:15px;font-weight:bold;color:#4e3c10">510,000</div>
<div class="t" style="left:1067px;top:297px;width:102px;text-align:right;font-size:11px;line-height:15px;font-weight:bold;color:#4e3c10">112,000</div>
<div class="t" style="left:1172px;top:297px;width:102px;text-align:right;font-size:11px;line-height:15px;font-weight:bold;color:#4e3c10">50,000</div>
<div class="t" style="left:1277px;top:297px;width:102px;text-align:right;font-size:11px;line-height:15px;font-weight:bold;color:#4e3c10">53,500</div>
<div class="t" style="left:1382px;top:297px;width:102px;text-align:right;font-size:11px;line-height:15px;font-weight:bold;color:#4e3c10">93,500</div>
<div class="b" style="left:79px;top:311px;width:1408px;height:16px;background:#fff"></div>
<div class="b" style="left:79px;top:311px;width:1408px;height:1px;background:#b3a985"></div>
<div class="b" style="left:79px;top:326px;width:1408px;height:1px;background:#b3a985"></div>
<div class="b" style="left:79px;top:311px;width:1px;height:16px;background:#b3a985"></div>
<div class="b" style="left:436px;top:311px;width:1px;height:16px;background:#b3a985"></div>
<div class="b" style="left:541px;top:311px;width:1px;height:16px;background:#b3a985"></div>
<div class="b" style="left:646px;top:311px;width:1px;height:16px;background:#b3a985"></div>
<div class="b" style="left:751px;top:311px;width:1px;height:16px;background:#b3a985"></div>
<div class="b" style="left:856px;top:311px;width:1px;height:16px;background:#b3a985"></div>
<div class="b" style="left:961px;top:311px;width:1px;height:16px;background:#b3a985"></div>
<div class="b" style="left:1066px;top:311px;width:1px;height:16px;background:#b3a985"></div>
<div class="b" style="left:1171px;top:311px;width:1px;height:16px;background:#b3a985"></div>
<div class="b" style="left:1276px;top:311px;width:1px;height:16px;background:#b3a985"></div>
<div class="b" style="left:1381px;top:311px;width:1px;height:16px;background:#b3a985"></div>
<div class="b" style="left:1486px;top:311px;width:1px;height:16px;background:#b3a985"></div>
<div class="t" style="left:89px;top:312px;font-size:11px;line-height:15px;font-weight:bold;color:#000;">Склад №1001</div>
<div class="t" style="left:437px;top:312px;width:102px;text-align:right;font-size:11px;line-height:15px;font-weight:bold;color:#000">19,000</div>
<div class="t" style="left:647px;top:312px;width:102px;text-align:right;font-size:11px;line-height:15px;font-weight:bold;color:#000">19,000</div>
<div class="b" style="left:79px;top:326px;width:1408px;height:16px;background:#fff"></div>
<div class="b" style="left:79px;top:326px;width:1408px;height:1px;background:#b3a985"></div>
<div class="b" style="left:79px;top:341px;width:1408px;height:1px;background:#b3a985"></div>
<div class="b" style="left:79px;top:326px;width:1px;height:16px;background:#b3a985"></div>
<div class="b" style="left:436px;top:326px;width:1px;height:16px;background:#b3a985"></div>
<div class="b" style="left:541px;top:326px;width:1px;height:16px;background:#b3a985"></div>
<div class="b" style="left:646px;top:326px;width:1px;height:16px;background:#b3a985"></div>
<div class="b" style="left:751px;top:326px;width:1px;height:16px;background:#b3a985"></div>
<div class="b" style="left:856px;top:326px;width:1px;height:16px;background:#b3a985"></div>
<div class="b" style="left:961px;top:326px;width:1px;height:16px;background:#b3a985"></div>
<div class="b" style="left:1066px;top:326px;width:1px;height:16px;background:#b3a985"></div>
<div class="b" style="left:1171px;top:326px;width:1px;height:16px;background:#b3a985"></div>
<div class="b" style="left:1276px;top:326px;width:1px;height:16px;background:#b3a985"></div>
<div class="b" style="left:1381px;top:326px;width:1px;height:16px;background:#b3a985"></div>
<div class="b" style="left:1486px;top:326px;width:1px;height:16px;background:#b3a985"></div>
<div class="t" style="left:437px;top:327px;width:102px;text-align:right;font-size:11px;line-height:15px;font-weight:bold;color:#000">19,000</div>
<div class="t" style="left:647px;top:327px;width:102px;text-align:right;font-size:11px;line-height:15px;font-weight:bold;color:#000">19,000</div>
<div class="b" style="left:79px;top:341px;width:1408px;height:16px;background:#fff"></div>
<div class="b" style="left:79px;top:341px;width:1408px;height:1px;background:#b3a985"></div>
<div class="b" style="left:79px;top:356px;width:1408px;height:1px;background:#b3a985"></div>
<div class="b" style="left:79px;top:341px;width:1px;height:16px;background:#b3a985"></div>
<div class="b" style="left:436px;top:341px;width:1px;height:16px;background:#b3a985"></div>
<div class="b" style="left:541px;top:341px;width:1px;height:16px;background:#b3a985"></div>
<div class="b" style="left:646px;top:341px;width:1px;height:16px;background:#b3a985"></div>
<div class="b" style="left:751px;top:341px;width:1px;height:16px;background:#b3a985"></div>
<div class="b" style="left:856px;top:341px;width:1px;height:16px;background:#b3a985"></div>
<div class="b" style="left:961px;top:341px;width:1px;height:16px;background:#b3a985"></div>
<div class="b" style="left:1066px;top:341px;width:1px;height:16px;background:#b3a985"></div>
<div class="b" style="left:1171px;top:341px;width:1px;height:16px;background:#b3a985"></div>
<div class="b" style="left:1276px;top:341px;width:1px;height:16px;background:#b3a985"></div>
<div class="b" style="left:1381px;top:341px;width:1px;height:16px;background:#b3a985"></div>
<div class="b" style="left:1486px;top:341px;width:1px;height:16px;background:#b3a985"></div>
<div class="t" style="left:437px;top:342px;width:102px;text-align:right;font-size:11px;line-height:15px;color:#000">19,000</div>
<div class="t" style="left:647px;top:342px;width:102px;text-align:right;font-size:11px;line-height:15px;color:#000">19,000</div>
<div class="b" style="left:79px;top:356px;width:1408px;height:16px;background:#fff"></div>
<div class="b" style="left:79px;top:356px;width:1408px;height:1px;background:#b3a985"></div>
<div class="b" style="left:79px;top:371px;width:1408px;height:1px;background:#b3a985"></div>
<div class="b" style="left:79px;top:356px;width:1px;height:16px;background:#b3a985"></div>
<div class="b" style="left:436px;top:356px;width:1px;height:16px;background:#b3a985"></div>
<div class="b" style="left:541px;top:356px;width:1px;height:16px;background:#b3a985"></div>
<div class="b" style="left:646px;top:356px;width:1px;height:16px;background:#b3a985"></div>
<div class="b" style="left:751px;top:356px;width:1px;height:16px;background:#b3a985"></div>
<div class="b" style="left:856px;top:356px;width:1px;height:16px;background:#b3a985"></div>
<div class="b" style="left:961px;top:356px;width:1px;height:16px;background:#b3a985"></div>
<div class="b" style="left:1066px;top:356px;width:1px;height:16px;background:#b3a985"></div>
<div class="b" style="left:1171px;top:356px;width:1px;height:16px;background:#b3a985"></div>
<div class="b" style="left:1276px;top:356px;width:1px;height:16px;background:#b3a985"></div>
<div class="b" style="left:1381px;top:356px;width:1px;height:16px;background:#b3a985"></div>
<div class="b" style="left:1486px;top:356px;width:1px;height:16px;background:#b3a985"></div>
<div class="t" style="left:89px;top:357px;font-size:11px;line-height:15px;font-weight:bold;color:#000;">Склад №1026</div>
<div class="t" style="left:437px;top:357px;width:102px;text-align:right;font-size:11px;line-height:15px;font-weight:bold;color:#000">215,000</div>
<div class="t" style="left:647px;top:357px;width:102px;text-align:right;font-size:11px;line-height:15px;font-weight:bold;color:#000">215,000</div>
<div class="t" style="left:752px;top:357px;width:102px;text-align:right;font-size:11px;line-height:15px;font-weight:bold;color:#000">70,000</div>
<div class="t" style="left:1067px;top:357px;width:102px;text-align:right;font-size:11px;line-height:15px;font-weight:bold;color:#000">50,000</div>
<div class="t" style="left:1277px;top:357px;width:102px;text-align:right;font-size:11px;line-height:15px;font-weight:bold;color:#000">10,000</div>
<div class="t" style="left:1382px;top:357px;width:102px;text-align:right;font-size:11px;line-height:15px;font-weight:bold;color:#000">50,000</div>
<div class="b" style="left:79px;top:371px;width:1408px;height:16px;background:#fff"></div>
<div class="b" style="left:79px;top:371px;width:1408px;height:1px;background:#b3a985"></div>
<div class="b" style="left:79px;top:386px;width:1408px;height:1px;background:#b3a985"></div>
<div class="b" style="left:79px;top:371px;width:1px;height:16px;background:#b3a985"></div>
<div class="b" style="left:436px;top:371px;width:1px;height:16px;background:#b3a985"></div>
<div class="b" style="left:541px;top:371px;width:1px;height:16px;background:#b3a985"></div>
<div class="b" style="left:646px;top:371px;width:1px;height:16px;background:#b3a985"></div>
<div class="b" style="left:751px;top:371px;width:1px;height:16px;background:#b3a985"></div>
<div class="b" style="left:856px;top:371px;width:1px;height:16px;background:#b3a985"></div>
<div class="b" style="left:961px;top:371px;width:1px;height:16px;background:#b3a985"></div>
<div class="b" style="left:1066px;top:371px;width:1px;height:16px;background:#b3a985"></div>
<div class="b" style="left:1171px;top:371px;width:1px;height:16px;background:#b3a985"></div>
<div class="b" style="left:1276px;top:371px;width:1px;height:16px;background:#b3a985"></div>
<div class="b" style="left:1381px;top:371px;width:1px;height:16px;background:#b3a985"></div>
<div class="b" style="left:1486px;top:371px;width:1px;height:16px;background:#b3a985"></div>
<div class="t" style="left:437px;top:372px;width:102px;text-align:right;font-size:11px;line-height:15px;font-weight:bold;color:#000">215,000</div>
<div class="t" style="left:647px;top:372px;width:102px;text-align:right;font-size:11px;line-height:15px;font-weight:bold;color:#000">215,000</div>
<div class="t" style="left:752px;top:372px;width:102px;text-align:right;font-size:11px;line-height:15px;font-weight:bold;color:#000">70,000</div>
<div class="b" style="left:79px;top:386px;width:1408px;height:16px;background:#fff"></div>
<div class="b" style="left:79px;top:386px;width:1408px;height:1px;background:#b3a985"></div>
<div class="b" style="left:79px;top:401px;width:1408px;height:1px;background:#b3a985"></div>
<div class="b" style="left:79px;top:386px;width:1px;height:16px;background:#b3a985"></div>
<div class="b" style="left:436px;top:386px;width:1px;height:16px;background:#b3a985"></div>
<div class="b" style="left:541px;top:386px;width:1px;height:16px;background:#b3a985"></div>
<div class="b" style="left:646px;top:386px;width:1px;height:16px;background:#b3a985"></div>
<div class="b" style="left:751px;top:386px;width:1px;height:16px;background:#b3a985"></div>
<div class="b" style="left:856px;top:386px;width:1px;height:16px;background:#b3a985"></div>
<div class="b" style="left:961px;top:386px;width:1px;height:16px;background:#b3a985"></div>
<div class="b" style="left:1066px;top:386px;width:1px;height:16px;background:#b3a985"></div>
<div class="b" style="left:1171px;top:386px;width:1px;height:16px;background:#b3a985"></div>
<div class="b" style="left:1276px;top:386px;width:1px;height:16px;background:#b3a985"></div>
<div class="b" style="left:1381px;top:386px;width:1px;height:16px;background:#b3a985"></div>
<div class="b" style="left:1486px;top:386px;width:1px;height:16px;background:#b3a985"></div>
<div class="t" style="left:437px;top:387px;width:102px;text-align:right;font-size:11px;line-height:15px;color:#000">215,000</div>
<div class="t" style="left:647px;top:387px;width:102px;text-align:right;font-size:11px;line-height:15px;color:#000">215,000</div>
<div class="b" style="left:79px;top:401px;width:1408px;height:30px;background:#fff"></div>
<div class="b" style="left:79px;top:401px;width:1408px;height:1px;background:#b3a985"></div>
<div class="b" style="left:79px;top:430px;width:1408px;height:1px;background:#b3a985"></div>
<div class="b" style="left:79px;top:401px;width:1px;height:30px;background:#b3a985"></div>
<div class="b" style="left:436px;top:401px;width:1px;height:30px;background:#b3a985"></div>
<div class="b" style="left:541px;top:401px;width:1px;height:30px;background:#b3a985"></div>
<div class="b" style="left:646px;top:401px;width:1px;height:30px;background:#b3a985"></div>
<div class="b" style="left:751px;top:401px;width:1px;height:30px;background:#b3a985"></div>
<div class="b" style="left:856px;top:401px;width:1px;height:30px;background:#b3a985"></div>
<div class="b" style="left:961px;top:401px;width:1px;height:30px;background:#b3a985"></div>
<div class="b" style="left:1066px;top:401px;width:1px;height:30px;background:#b3a985"></div>
<div class="b" style="left:1171px;top:401px;width:1px;height:30px;background:#b3a985"></div>
<div class="b" style="left:1276px;top:401px;width:1px;height:30px;background:#b3a985"></div>
<div class="b" style="left:1381px;top:401px;width:1px;height:30px;background:#b3a985"></div>
<div class="b" style="left:1486px;top:401px;width:1px;height:30px;background:#b3a985"></div>
<div class="t" style="left:103px;top:402px;font-size:11px;line-height:14px;color:#000;">Приходный ордер на товары АД-00000002 от 25.01.2023
16:12:18</div>
<div class="t" style="left:752px;top:402px;width:102px;text-align:right;font-size:11px;line-height:15px;color:#000">70,000</div>
<div class="b" style="left:79px;top:430px;width:1408px;height:16px;background:#fff"></div>
<div class="b" style="left:79px;top:430px;width:1408px;height:1px;background:#b3a985"></div>
<div class="b" style="left:79px;top:445px;width:1408px;height:1px;background:#b3a985"></div>
<div class="b" style="left:79px;top:430px;width:1px;height:16px;background:#b3a985"></div>
<div class="b" style="left:436px;top:430px;width:1px;height:16px;background:#b3a985"></div>
<div class="b" style="left:541px;top:430px;width:1px;height:16px;background:#b3a985"></div>
<div class="b" style="left:646px;top:430px;width:1px;height:16px;background:#b3a985"></div>
<div class="b" style="left:751px;top:430px;width:1px;height:16px;background:#b3a985"></div>
<div class="b" style="left:856px;top:430px;width:1px;height:16px;background:#b3a985"></div>
<div class="b" style="left:961px;top:430px;width:1px;height:16px;background:#b3a985"></div>
<div class="b" style="left:1066px;top:430px;width:1px;height:16px;background:#b3a985"></div>
<div class="b" style="left:1171px;top:430px;width:1px;height:16px;background:#b3a985"></div>
<div class="b" style="left:1276px;top:430px;width:1px;height:16px;background:#b3a985"></div>
<div class="b" style="left:1381px;top:430px;width:1px;height:16px;background:#b3a985"></div>
<div class="b" style="left:1486px;top:430px;width:1px;height:16px;background:#b3a985"></div>
<div class="t" style="left:96px;top:431px;font-size:11px;line-height:15px;font-weight:bold;color:#000;">Контрагент №10756</div>
<div class="t" style="left:1067px;top:431px;width:102px;text-align:right;font-size:11px;line-height:15px;font-weight:bold;color:#000">50,000</div>
<div class="t" style="left:1277px;top:431px;width:102px;text-align:right;font-size:11px;line-height:15px;font-weight:bold;color:#000">10,000</div>
<div class="t" style="left:1382px;top:431px;width:102px;text-align:right;font-size:11px;line-height:15px;font-weight:bold;color:#000">50,000</div>
<div class="b" style="left:79px;top:445px;width:1408px;height:16px;background:#fff"></div>
<div class="b" style="left:79px;top:445px;width:1408px;height:1px;background:#b3a985"></div>
<div class="b" style="left:79px;top:460px;width:1408px;height:1px;background:#b3a985"></div>
<div class="b" style="left:79px;top:445px;width:1px;height:16px;background:#b3a985"></div>
<div class="b" style="left:436px;top:445px;width:1px;height:16px;background:#b3a985"></div>
<div class="b" style="left:541px;top:445px;width:1px;height:16px;background:#b3a985"></div>
<div class="b" style="left:646px;top:445px;width:1px;height:16px;background:#b3a985"></div>
<div class="b" style="left:751px;top:445px;width:1px;height:16px;background:#b3a985"></div>
<div class="b" style="left:856px;top:445px;width:1px;height:16px;background:#b3a985"></div>
<div class="b" style="left:961px;top:445px;width:1px;height:16px;background:#b3a985"></div>
<div class="b" style="left:1066px;top:445px;width:1px;height:16px;background:#b3a985"></div>
<div class="b" style="left:1171px;top:445px;width:1px;height:16px;background:#b3a985"></div>
<div class="b" style="left:1276px;top:445px;width:1px;height:16px;background:#b3a985"></div>
<div class="b" style="left:1381px;top:445px;width:1px;height:16px;background:#b3a985"></div>
<div class="b" style="left:1486px;top:445px;width:1px;height:16px;background:#b3a985"></div>
<div class="t" style="left:103px;top:446px;font-size:11px;line-height:15px;color:#000;">Спецификация 00000000005 от 09.01.2023 14:15:38</div>
<div class="t" style="left:1067px;top:446px;width:102px;text-align:right;font-size:11px;line-height:15px;color:#000">50,000</div>
<div class="t" style="left:1277px;top:446px;width:102px;text-align:right;font-size:11px;line-height:15px;color:#000">10,000</div>
<div class="t" style="left:1382px;top:446px;width:102px;text-align:right;font-size:11px;line-height:15px;color:#000">50,000</div>
<div class="b" style="left:79px;top:460px;width:1408px;height:16px;background:#fff"></div>
<div class="b" style="left:79px;top:460px;width:1408px;height:1px;background:#b3a985"></div>
<div class="b" style="left:79px;top:475px;width:1408px;height:1px;background:#b3a985"></div>
<div class="b" style="left:79px;top:460px;width:1px;height:16px;background:#b3a985"></div>
<div class="b" style="left:436px;top:460px;width:1px;height:16px;background:#b3a985"></div>
<div class="b" style="left:541px;top:460px;width:1px;height:16px;background:#b3a985"></div>
<div class="b" style="left:646px;top:460px;width:1px;height:16px;background:#b3a985"></div>
<div class="b" style="left:751px;top:460px;width:1px;height:16px;background:#b3a985"></div>
<div class="b" style="left:856px;top:460px;width:1px;height:16px;background:#b3a985"></div>
<div class="b" style="left:961px;top:460px;width:1px;height:16px;background:#b3a985"></div>
<div class="b" style="left:1066px;top:460px;width:1px;height:16px;background:#b3a985"></div>
<div class="b" style="left:1171px;top:460px;width:1px;height:16px;background:#b3a985"></div>
<div class="b" style="left:1276px;top:460px;width:1px;height:16px;background:#b3a985"></div>
<div class="b" style="left:1381px;top:460px;width:1px;height:16px;background:#b3a985"></div>
<div class="b" style="left:1486px;top:460px;width:1px;height:16px;background:#b3a985"></div>
<div class="t" style="left:89px;top:461px;font-size:11px;line-height:15px;font-weight:bold;color:#000;">Склад №1050</div>
<div class="t" style="left:437px;top:461px;width:102px;text-align:right;font-size:11px;line-height:15px;font-weight:bold;color:#000">250,000</div>
<div class="t" style="left:647px;top:461px;width:102px;text-align:right;font-size:11px;line-height:15px;font-weight:bold;color:#000">250,000</div>
<div class="t" style="left:752px;top:461px;width:102px;text-align:right;font-size:11px;line-height:15px;font-weight:bold;color:#000">250,000</div>
<div class="t" style="left:1067px;top:461px;width:102px;text-align:right;font-size:11px;line-height:15px;font-weight:bold;color:#000">25,000</div>
<div class="t" style="left:1277px;top:461px;width:102px;text-align:right;font-size:11px;line-height:15px;font-weight:bold;color:#000">12,500</div>
<div class="t" style="left:1382px;top:461px;width:102px;text-align:right;font-size:11px;line-height:15px;font-weight:bold;color:#000">12,500</div>
<div class="b" style="left:79px;top:475px;width:1408px;height:16px;background:#fff"></div>
<div class="b" style="left:79px;top:475px;width:1408px;height:1px;background:#b3a985"></div>
<div class="b" style="left:79px;top:490px;width:1408px;height:1px;background:#b3a985"></div>
<div class="b" style="left:79px;top:475px;width:1px;height:16px;background:#b3a985"></div>
<div class="b" style="left:436px;top:475px;width:1px;height:16px;background:#b3a985"></div>
<div class="b" style="left:541px;top:475px;width:1px;height:16px;background:#b3a985"></div>
<div class="b" style="left:646px;top:475px;width:1px;height:16px;background:#b3a985"></div>
<div class="b" style="left:751px;top:475px;width:1px;height:16px;background:#b3a985"></div>
<div class="b" style="left:856px;top:475px;width:1px;height:16px;background:#b3a985"></div>
<div class="b" style="left:961px;top:475px;width:1px;height:16px;background:#b3a985"></div>
<div class="b" style="left:1066px;top:475px;width:1px;height:16px;background:#b3a985"></div>
<div class="b" style="left:1171px;top:475px;width:1px;height:16px;background:#b3a985"></div>
<div class="b" style="left:1276px;top:475px;width:1px;height:16px;background:#b3a985"></div>
<div class="b" style="left:1381px;top:475px;width:1px;height:16px;background:#b3a985"></div>
<div class="b" style="left:1486px;top:475px;width:1px;height:16px;background:#b3a985"></div>
<div class="t" style="left:437px;top:476px;width:102px;text-align:right;font-size:11px;line-height:15px;font-weight:bold;color:#000">250,000</div>
<div class="t" style="left:647px;top:476px;width:102px;text-align:right;font-size:11px;line-height:15px;font-weight:bold;color:#000">250,000</div>
<div class="t" style="left:752px;top:476px;width:102px;text-align:right;font-size:11px;line-height:15px;font-weight:bold;color:#000">250,000</div>
<div class="b" style="left:79px;top:490px;width:1408px;height:16px;background:#fff"></div>
<div class="b" style="left:79px;top:490px;width:1408px;height:1px;background:#b3a985"></div>
<div class="b" style="left:79px;top:505px;width:1408px;height:1px;background:#b3a985"></div>
<div class="b" style="left:79px;top:490px;width:1px;height:16px;background:#b3a985"></div>
<div class="b" style="left:436px;top:490px;width:1px;height:16px;background:#b3a985"></div>
<div class="b" style="left:541px;top:490px;width:1px;height:16px;background:#b3a985"></div>
<div class="b" style="left:646px;top:490px;width:1px;height:16px;background:#b3a985"></div>
<div class="b" style="left:751px;top:490px;width:1px;height:16px;background:#b3a985"></div>
<div class="b" style="left:856px;top:490px;width:1px;height:16px;background:#b3a985"></div>
<div class="b" style="left:961px;top:490px;width:1px;height:16px;background:#b3a985"></div>
<div class="b" style="left:1066px;top:490px;width:1px;height:16px;background:#b3a985"></div>
<div class="b" style="left:1171px;top:490px;width:1px;height:16px;background:#b3a985"></div>
<div class="b" style="left:1276px;top:490px;width:1px;height:16px;background:#b3a985"></div>
<div class="b" style="left:1381px;top:490px;width:1px;height:16px;background:#b3a985"></div>
<div class="b" style="left:1486px;top:490px;width:1px;height:16px;background:#b3a985"></div>
<div class="t" style="left:437px;top:491px;width:102px;text-align:right;font-size:11px;line-height:15px;color:#000">250,000</div>
<div class="t" style="left:647px;top:491px;width:102px;text-align:right;font-size:11px;line-height:15px;color:#000">250,000</div>
<div class="b" style="left:79px;top:505px;width:1408px;height:30px;background:#fff"></div>
<div class="b" style="left:79px;top:505px;width:1408px;height:1px;background:#b3a985"></div>
<div class="b" style="left:79px;top:534px;width:1408px;height:1px;background:#b3a985"></div>
<div class="b" style="left:79px;top:505px;width:1px;height:30px;background:#b3a985"></div>
<div class="b" style="left:436px;top:505px;width:1px;height:30px;background:#b3a985"></div>
<div class="b" style="left:541px;top:505px;width:1px;height:30px;background:#b3a985"></div>
<div class="b" style="left:646px;top:505px;width:1px;height:30px;background:#b3a985"></div>
<div class="b" style="left:751px;top:505px;width:1px;height:30px;background:#b3a985"></div>
<div class="b" style="left:856px;top:505px;width:1px;height:30px;background:#b3a985"></div>
<div class="b" style="left:961px;top:505px;width:1px;height:30px;background:#b3a985"></div>
<div class="b" style="left:1066px;top:505px;width:1px;height:30px;background:#b3a985"></div>
<div class="b" style="left:1171px;top:505px;width:1px;height:30px;background:#b3a985"></div>
<div class="b" style="left:1276px;top:505px;width:1px;height:30px;background:#b3a985"></div>
<div class="b" style="left:1381px;top:505px;width:1px;height:30px;background:#b3a985"></div>
<div class="b" style="left:1486px;top:505px;width:1px;height:30px;background:#b3a985"></div>
<div class="t" style="left:103px;top:506px;font-size:11px;line-height:14px;color:#000;">Приходный ордер на товары АД-00000001 от 19.01.2023
17:35:51</div>
<div class="t" style="left:752px;top:506px;width:102px;text-align:right;font-size:11px;line-height:15px;color:#000">250,000</div>
<div class="b" style="left:79px;top:534px;width:1408px;height:16px;background:#fff"></div>
<div class="b" style="left:79px;top:534px;width:1408px;height:1px;background:#b3a985"></div>
<div class="b" style="left:79px;top:549px;width:1408px;height:1px;background:#b3a985"></div>
<div class="b" style="left:79px;top:534px;width:1px;height:16px;background:#b3a985"></div>
<div class="b" style="left:436px;top:534px;width:1px;height:16px;background:#b3a985"></div>
<div class="b" style="left:541px;top:534px;width:1px;height:16px;background:#b3a985"></div>
<div class="b" style="left:646px;top:534px;width:1px;height:16px;background:#b3a985"></div>
<div class="b" style="left:751px;top:534px;width:1px;height:16px;background:#b3a985"></div>
<div class="b" style="left:856px;top:534px;width:1px;height:16px;background:#b3a985"></div>
<div class="b" style="left:961px;top:534px;width:1px;height:16px;background:#b3a985"></div>
<div class="b" style="left:1066px;top:534px;width:1px;height:16px;background:#b3a985"></div>
<div class="b" style="left:1171px;top:534px;width:1px;height:16px;background:#b3a985"></div>
<div class="b" style="left:1276px;top:534px;width:1px;height:16px;background:#b3a985"></div>
<div class="b" style="left:1381px;top:534px;width:1px;height:16px;background:#b3a985"></div>
<div class="b" style="left:1486px;top:534px;width:1px;height:16px;background:#b3a985"></div>
<div class="t" style="left:96px;top:535px;font-size:11px;line-height:15px;font-weight:bold;color:#000;">Контрагент №427</div>
<div class="t" style="left:1067px;top:535px;width:102px;text-align:right;font-size:11px;line-height:15px;font-weight:bold;color:#000">25,000</div>
<div class="t" style="left:1277px;top:535px;width:102px;text-align:right;font-size:11px;line-height:15px;font-weight:bold;color:#000">12,500</div>
<div class="t" style="left:1382px;top:535px;width:102px;text-align:right;font-size:11px;line-height:15px;font-weight:bold;color:#000">12,500</div>
<div class="b" style="left:79px;top:549px;width:1408px;height:16px;background:#fff"></div>
<div class="b" style="left:79px;top:549px;width:1408px;height:1px;background:#b3a985"></div>
<div class="b" style="left:79px;top:564px;width:1408px;height:1px;background:#b3a985"></div>
<div class="b" style="left:79px;top:549px;width:1px;height:16px;background:#b3a985"></div>
<div class="b" style="left:436px;top:549px;width:1px;height:16px;background:#b3a985"></div>
<div class="b" style="left:541px;top:549px;width:1px;height:16px;background:#b3a985"></div>
<div class="b" style="left:646px;top:549px;width:1px;height:16px;background:#b3a985"></div>
<div class="b" style="left:751px;top:549px;width:1px;height:16px;background:#b3a985"></div>
<div class="b" style="left:856px;top:549px;width:1px;height:16px;background:#b3a985"></div>
<div class="b" style="left:961px;top:549px;width:1px;height:16px;background:#b3a985"></div>
<div class="b" style="left:1066px;top:549px;width:1px;height:16px;background:#b3a985"></div>
<div class="b" style="left:1171px;top:549px;width:1px;height:16px;background:#b3a985"></div>
<div class="b" style="left:1276px;top:549px;width:1px;height:16px;background:#b3a985"></div>
<div class="b" style="left:1381px;top:549px;width:1px;height:16px;background:#b3a985"></div>
<div class="b" style="left:1486px;top:549px;width:1px;height:16px;background:#b3a985"></div>
<div class="t" style="left:103px;top:550px;font-size:11px;line-height:15px;color:#000;">Спецификация 00000001141 от 19.12.2022 13:00:10</div>
<div class="t" style="left:1067px;top:550px;width:102px;text-align:right;font-size:11px;line-height:15px;color:#000">25,000</div>
<div class="t" style="left:1277px;top:550px;width:102px;text-align:right;font-size:11px;line-height:15px;color:#000">12,500</div>
<div class="t" style="left:1382px;top:550px;width:102px;text-align:right;font-size:11px;line-height:15px;color:#000">12,500</div>
<div class="b" style="left:79px;top:564px;width:1408px;height:16px;background:#fff"></div>
<div class="b" style="left:79px;top:564px;width:1408px;height:1px;background:#b3a985"></div>
<div class="b" style="left:79px;top:579px;width:1408px;height:1px;background:#b3a985"></div>
<div class="b" style="left:79px;top:564px;width:1px;height:16px;background:#b3a985"></div>
<div class="b" style="left:436px;top:564px;width:1px;height:16px;background:#b3a985"></div>
<div class="b" style="left:541px;top:564px;width:1px;height:16px;background:#b3a985"></div>
<div class="b" style="left:646px;top:564px;width:1px;height:16px;background:#b3a985"></div>
<div class="b" style="left:751px;top:564px;width:1px;height:16px;background:#b3a985"></div>
<div class="b" style="left:856px;top:564px;width:1px;height:16px;background:#b3a985"></div>
<div class="b" style="left:961px;top:564px;width:1px;height:16px;background:#b3a985"></div>
<div class="b" style="left:1066px;top:564px;width:1px;height:16px;background:#b3a985"></div>
<div class="b" style="left:1171px;top:564px;width:1px;height:16px;background:#b3a985"></div>
<div class="b" style="left:1276px;top:564px;width:1px;height:16px;background:#b3a985"></div>
<div class="b" style="left:1381px;top:564px;width:1px;height:16px;background:#b3a985"></div>
<div class="b" style="left:1486px;top:564px;width:1px;height:16px;background:#b3a985"></div>
<div class="t" style="left:89px;top:565px;font-size:11px;line-height:15px;font-weight:bold;color:#000;">Склад №1072</div>
<div class="t" style="left:437px;top:565px;width:102px;text-align:right;font-size:11px;line-height:15px;font-weight:bold;color:#000">10,000</div>
<div class="t" style="left:647px;top:565px;width:102px;text-align:right;font-size:11px;line-height:15px;font-weight:bold;color:#000">10,000</div>
<div class="t" style="left:1067px;top:565px;width:102px;text-align:right;font-size:11px;line-height:15px;font-weight:bold;color:#000">6,000</div>
<div class="b" style="left:79px;top:579px;width:1408px;height:16px;background:#fff"></div>
<div class="b" style="left:79px;top:579px;width:1408px;height:1px;background:#b3a985"></div>
<div class="b" style="left:79px;top:594px;width:1408px;height:1px;background:#b3a985"></div>
<div class="b" style="left:79px;top:579px;width:1px;height:16px;background:#b3a985"></div>
<div class="b" style="left:436px;top:579px;width:1px;height:16px;background:#b3a985"></div>
<div class="b" style="left:541px;top:579px;width:1px;height:16px;background:#b3a985"></div>
<div class="b" style="left:646px;top:579px;width:1px;height:16px;background:#b3a985"></div>
<div class="b" style="left:751px;top:579px;width:1px;height:16px;background:#b3a985"></div>
<div class="b" style="left:856px;top:579px;width:1px;height:16px;background:#b3a985"></div>
<div class="b" style="left:961px;top:579px;width:1px;height:16px;background:#b3a985"></div>
<div class="b" style="left:1066px;top:579px;width:1px;height:16px;background:#b3a985"></div>
<div class="b" style="left:1171px;top:579px;width:1px;height:16px;background:#b3a985"></div>
<div class="b" style="left:1276px;top:579px;width:1px;height:16px;background:#b3a985"></div>
<div class="b" style="left:1381px;top:579px;width:1px;height:16px;background:#b3a985"></div>
<div class="b" style="left:1486px;top:579px;width:1px;height:16px;background:#b3a985"></div>
<div class="t" style="left:437px;top:580px;width:102px;text-align:right;font-size:11px;line-height:15px;font-weight:bold;color:#000">10,000</div>
<div class="t" style="left:647px;top:580px;width:102px;text-align:right;font-size:11px;line-height:15px;font-weight:bold;color:#000">10,000</div>
<div class="b" style="left:79px;top:594px;width:1408px;height:16px;background:#fff"></div>
<div class="b" style="left:79px;top:594px;width:1408px;height:1px;background:#b3a985"></div>
<div class="b" style="left:79px;top:609px;width:1408px;height:1px;background:#b3a985"></div>
<div class="b" style="left:79px;top:594px;width:1px;height:16px;background:#b3a985"></div>
<div class="b" style="left:436px;top:594px;width:1px;height:16px;background:#b3a985"></div>
<div class="b" style="left:541px;top:594px;width:1px;height:16px;background:#b3a985"></div>
<div class="b" style="left:646px;top:594px;width:1px;height:16px;background:#b3a985"></div>
<div class="b" style="left:751px;top:594px;width:1px;height:16px;background:#b3a985"></div>
<div class="b" style="left:856px;top:594px;width:1px;height:16px;background:#b3a985"></div>
<div class="b" style="left:961px;top:594px;width:1px;height:16px;background:#b3a985"></div>
<div class="b" style="left:1066px;top:594px;width:1px;height:16px;background:#b3a985"></div>
<div class="b" style="left:1171px;top:594px;width:1px;height:16px;background:#b3a985"></div>
<div class="b" style="left:1276px;top:594px;width:1px;height:16px;background:#b3a985"></div>
<div class="b" style="left:1381px;top:594px;width:1px;height:16px;background:#b3a985"></div>
<div class="b" style="left:1486px;top:594px;width:1px;height:16px;background:#b3a985"></div>
<div class="t" style="left:437px;top:595px;width:102px;text-align:right;font-size:11px;line-height:15px;color:#000">10,000</div>
<div class="t" style="left:647px;top:595px;width:102px;text-align:right;font-size:11px;line-height:15px;color:#000">10,000</div>
<div class="b" style="left:79px;top:609px;width:1408px;height:16px;background:#fff"></div>
<div class="b" style="left:79px;top:609px;width:1408px;height:1px;background:#b3a985"></div>
<div class="b" style="left:79px;top:624px;width:1408px;height:1px;background:#b3a985"></div>
<div class="b" style="left:79px;top:609px;width:1px;height:16px;background:#b3a985"></div>
<div class="b" style="left:436px;top:609px;width:1px;height:16px;background:#b3a985"></div>
<div class="b" style="left:541px;top:609px;width:1px;height:16px;background:#b3a985"></div>
<div class="b" style="left:646px;top:609px;width:1px;height:16px;background:#b3a985"></div>
<div class="b" style="left:751px;top:609px;width:1px;height:16px;background:#b3a985"></div>
<div class="b" style="left:856px;top:609px;width:1px;height:16px;background:#b3a985"></div>
<div class="b" style="left:961px;top:609px;width:1px;height:16px;background:#b3a985"></div>
<div class="b" style="left:1066px;top:609px;width:1px;height:16px;background:#b3a985"></div>
<div class="b" style="left:1171px;top:609px;width:1px;height:16px;background:#b3a985"></div>
<div class="b" style="left:1276px;top:609px;width:1px;height:16px;background:#b3a985"></div>
<div class="b" style="left:1381px;top:609px;width:1px;height:16px;background:#b3a985"></div>
<div class="b" style="left:1486px;top:609px;width:1px;height:16px;background:#b3a985"></div>
<div class="t" style="left:96px;top:610px;font-size:11px;line-height:15px;font-weight:bold;color:#000;">Контрагент №927</div>
<div class="t" style="left:1067px;top:610px;width:102px;text-align:right;font-size:11px;line-height:15px;font-weight:bold;color:#000">6,000</div>
<div class="b" style="left:79px;top:624px;width:1408px;height:16px;background:#fff"></div>
<div class="b" style="left:79px;top:624px;width:1408px;height:1px;background:#b3a985"></div>
<div class="b" style="left:79px;top:639px;width:1408px;height:1px;background:#b3a985"></div>
<div class="b" style="left:79px;top:624px;width:1px;height:16px;background:#b3a985"></div>
<div class="b" style="left:436px;top:624px;width:1px;height:16px;background:#b3a985"></div>
<div class="b" style="left:541px;top:624px;width:1px;height:16px;background:#b3a985"></div>
<div class="b" style="left:646px;top:624px;width:1px;height:16px;background:#b3a985"></div>
<div class="b" style="left:751px;top:624px;width:1px;height:16px;background:#b3a985"></div>
<div class="b" style="left:856px;top:624px;width:1px;height:16px;background:#b3a985"></div>
<div class="b" style="left:961px;top:624px;width:1px;height:16px;background:#b3a985"></div>
<div class="b" style="left:1066px;top:624px;width:1px;height:16px;background:#b3a985"></div>
<div class="b" style="left:1171px;top:624px;width:1px;height:16px;background:#b3a985"></div>
<div class="b" style="left:1276px;top:624px;width:1px;height:16px;background:#b3a985"></div>
<div class="b" style="left:1381px;top:624px;width:1px;height:16px;background:#b3a985"></div>
<div class="b" style="left:1486px;top:624px;width:1px;height:16px;background:#b3a985"></div>
<div class="t" style="left:103px;top:625px;font-size:11px;line-height:15px;color:#000;">Спецификация 00000001122 от 02.12.2022 12:52:38</div>
<div class="t" style="left:1067px;top:625px;width:102px;text-align:right;font-size:11px;line-height:15px;color:#000">6,000</div>
<div class="b" style="left:79px;top:639px;width:1408px;height:16px;background:#fff"></div>
<div class="b" style="left:79px;top:639px;width:1408px;height:1px;background:#b3a985"></div>
<div class="b" style="left:79px;top:654px;width:1408px;height:1px;background:#b3a985"></div>
<div class="b" style="left:79px;top:639px;width:1px;height:16px;background:#b3a985"></div>
<div class="b" style="left:436px;top:639px;width:1px;height:16px;background:#b3a985"></div>
<div class="b" style="left:541px;top:639px;width:1px;height:16px;background:#b3a985"></div>
<div class="b" style="left:646px;top:639px;width:1px;height:16px;background:#b3a985"></div>
<div class="b" style="left:751px;top:639px;width:1px;height:16px;background:#b3a985"></div>
<div class="b" style="left:856px;top:639px;width:1px;height:16px;background:#b3a985"></div>
<div class="b" style="left:961px;top:639px;width:1px;height:16px;background:#b3a985"></div>
<div class="b" style="left:1066px;top:639px;width:1px;height:16px;background:#b3a985"></div>
<div class="b" style="left:1171px;top:639px;width:1px;height:16px;background:#b3a985"></div>
<div class="b" style="left:1276px;top:639px;width:1px;height:16px;background:#b3a985"></div>
<div class="b" style="left:1381px;top:639px;width:1px;height:16px;background:#b3a985"></div>
<div class="b" style="left:1486px;top:639px;width:1px;height:16px;background:#b3a985"></div>
<div class="t" style="left:89px;top:640px;font-size:11px;line-height:15px;font-weight:bold;color:#000;">Склад №1096</div>
<div class="t" style="left:857px;top:640px;width:102px;text-align:right;font-size:11px;line-height:15px;font-weight:bold;color:#000">572,000</div>
<div class="t" style="left:962px;top:640px;width:102px;text-align:right;font-size:11px;line-height:15px;font-weight:bold;color:#000">510,000</div>
<div class="b" style="left:79px;top:654px;width:1408px;height:16px;background:#fff"></div>
<div class="b" style="left:79px;top:654px;width:1408px;height:1px;background:#b3a985"></div>
<div class="b" style="left:79px;top:669px;width:1408px;height:1px;background:#b3a985"></div>
<div class="b" style="left:79px;top:654px;width:1px;height:16px;background:#b3a985"></div>
<div class="b" style="left:436px;top:654px;width:1px;height:16px;background:#b3a985"></div>
<div class="b" style="left:541px;top:654px;width:1px;height:16px;background:#b3a985"></div>
<div class="b" style="left:646px;top:654px;width:1px;height:16px;background:#b3a985"></div>
<div class="b" style="left:751px;top:654px;width:1px;height:16px;background:#b3a985"></div>
<div class="b" style="left:856px;top:654px;width:1px;height:16px;background:#b3a985"></div>
<div class="b" style="left:961px;top:654px;width:1px;height:16px;background:#b3a985"></div>
<div class="b" style="left:1066px;top:654px;width:1px;height:16px;background:#b3a985"></div>
<div class="b" style="left:1171px;top:654px;width:1px;height:16px;background:#b3a985"></div>
<div class="b" style="left:1276px;top:654px;width:1px;height:16px;background:#b3a985"></div>
<div class="b" style="left:1381px;top:654px;width:1px;height:16px;background:#b3a985"></div>
<div class="b" style="left:1486px;top:654px;width:1px;height:16px;background:#b3a985"></div>
<div class="t" style="left:857px;top:655px;width:102px;text-align:right;font-size:11px;line-height:15px;font-weight:bold;color:#000">572,000</div>
<div class="t" style="left:962px;top:655px;width:102px;text-align:right;font-size:11px;line-height:15px;font-weight:bold;color:#000">510,000</div>
<div class="b" style="left:79px;top:669px;width:1408px;height:30px;background:#fff"></div>
<div class="b" style="left:79px;top:669px;width:1408px;height:1px;background:#b3a985"></div>
<div class="b" style="left:79px;top:698px;width:1408px;height:1px;background:#b3a985"></div>
<div class="b" style="left:79px;top:669px;width:1px;height:30px;background:#b3a985"></div>
<div class="b" style="left:436px;top:669px;width:1px;height:30px;background:#b3a985"></div>
<div class="b" style="left:541px;top:669px;width:1px;height:30px;background:#b3a985"></div>
<div class="b" style="left:646px;top:669px;width:1px;height:30px;background:#b3a985"></div>
<div class="b" style="left:751px;top:669px;width:1px;height:30px;background:#b3a985"></div>
<div class="b" style="left:856px;top:669px;width:1px;height:30px;background:#b3a985"></div>
<div class="b" style="left:961px;top:669px;width:1px;height:30px;background:#b3a985"></div>
<div class="b" style="left:1066px;top:669px;width:1px;height:30px;background:#b3a985"></div>
<div class="b" style="left:1171px;top:669px;width:1px;height:30px;background:#b3a985"></div>
<div class="b" style="left:1276px;top:669px;width:1px;height:30px;background:#b3a985"></div>
<div class="b" style="left:1381px;top:669px;width:1px;height:30px;background:#b3a985"></div>
<div class="b" style="left:1486px;top:669px;width:1px;height:30px;background:#b3a985"></div>
<div class="t" style="left:103px;top:670px;font-size:11px;line-height:14px;color:#000;">Спецификация с поставщиком 00000000002 от 04.11.2021
14:54:54</div>
<div class="t" style="left:857px;top:670px;width:102px;text-align:right;font-size:11px;line-height:15px;color:#000">572,000</div>
<div class="b" style="left:79px;top:698px;width:1408px;height:16px;background:#fff"></div>
<div class="b" style="left:79px;top:698px;width:1408px;height:1px;background:#b3a985"></div>
<div class="b" style="left:79px;top:713px;width:1408px;height:1px;background:#b3a985"></div>
<div class="b" style="left:79px;top:698px;width:1px;height:16px;background:#b3a985"></div>
<div class="b" style="left:436px;top:698px;width:1px;height:16px;background:#b3a985"></div>
<div class="b" style="left:541px;top:698px;width:1px;height:16px;background:#b3a985"></div>
<div class="b" style="left:646px;top:698px;width:1px;height:16px;background:#b3a985"></div>
<div class="b" style="left:751px;top:698px;width:1px;height:16px;background:#b3a985"></div>
<div class="b" style="left:856px;top:698px;width:1px;height:16px;background:#b3a985"></div>
<div class="b" style="left:961px;top:698px;width:1px;height:16px;background:#b3a985"></div>
<div class="b" style="left:1066px;top:698px;width:1px;height:16px;background:#b3a985"></div>
<div class="b" style="left:1171px;top:698px;width:1px;height:16px;background:#b3a985"></div>
<div class="b" style="left:1276px;top:698px;width:1px;height:16px;background:#b3a985"></div>
<div class="b" style="left:1381px;top:698px;width:1px;height:16px;background:#b3a985"></div>
<div class="b" style="left:1486px;top:698px;width:1px;height:16px;background:#b3a985"></div>
<div class="t" style="left:103px;top:699px;font-size:11px;line-height:15px;color:#000;">Заказ поставщику АГ-00000030 от 31.01.2022 12:26:40</div>
<div class="t" style="left:962px;top:699px;width:102px;text-align:right;font-size:11px;line-height:15px;color:#000">510,000</div>
<div class="b" style="left:79px;top:713px;width:1408px;height:16px;background:#fff"></div>
<div class="b" style="left:79px;top:713px;width:1408px;height:1px;background:#b3a985"></div>
<div class="b" style="left:79px;top:728px;width:1408px;height:1px;background:#b3a985"></div>
<div class="b" style="left:79px;top:713px;width:1px;height:16px;background:#b3a985"></div>
<div class="b" style="left:436px;top:713px;width:1px;height:16px;background:#b3a985"></div>
<div class="b" style="left:541px;top:713px;width:1px;height:16px;background:#b3a985"></div>
<div class="b" style="left:646px;top:713px;width:1px;height:16px;background:#b3a985"></div>
<div class="b" style="left:751px;top:713px;width:1px;height:16px;background:#b3a985"></div>
<div class="b" style="left:856px;top:713px;width:1px;height:16px;background:#b3a985"></div>
<div class="b" style="left:961px;top:713px;width:1px;height:16px;background:#b3a985"></div>
<div class="b" style="left:1066px;top:713px;width:1px;height:16px;background:#b3a985"></div>
<div class="b" style="left:1171px;top:713px;width:1px;height:16px;background:#b3a985"></div>
<div class="b" style="left:1276px;top:713px;width:1px;height:16px;background:#b3a985"></div>
<div class="b" style="left:1381px;top:713px;width:1px;height:16px;background:#b3a985"></div>
<div class="b" style="left:1486px;top:713px;width:1px;height:16px;background:#b3a985"></div>
<div class="t" style="left:89px;top:714px;font-size:11px;line-height:15px;font-weight:bold;color:#000;">Склад №1107</div>
<div class="t" style="left:437px;top:714px;width:102px;text-align:right;font-size:11px;line-height:15px;font-weight:bold;color:#000">27,000</div>
<div class="t" style="left:647px;top:714px;width:102px;text-align:right;font-size:11px;line-height:15px;font-weight:bold;color:#000">27,000</div>
<div class="b" style="left:79px;top:728px;width:1408px;height:16px;background:#fff"></div>
<div class="b" style="left:79px;top:728px;width:1408px;height:1px;background:#b3a985"></div>
<div class="b" style="left:79px;top:743px;width:1408px;height:1px;background:#b3a985"></div>
<div class="b" style="left:79px;top:728px;width:1px;height:16px;background:#b3a985"></div>
<div class="b" style="left:436px;top:728px;width:1px;height:16px;background:#b3a985"></div>
<div class="b" style="left:541px;top:728px;width:1px;height:16px;background:#b3a985"></div>
<div class="b" style="left:646px;top:728px;width:1px;height:16px;background:#b3a985"></div>
<div class="b" style="left:751px;top:728px;width:1px;height:16px;background:#b3a985"></div>
<div class="b" style="left:856px;top:728px;width:1px;height:16px;background:#b3a985"></div>
<div class="b" style="left:961px;top:728px;width:1px;height:16px;background:#b3a985"></div>
<div class="b" style="left:1066px;top:728px;width:1px;height:16px;background:#b3a985"></div>
<div class="b" style="left:1171px;top:728px;width:1px;height:16px;background:#b3a985"></div>
<div class="b" style="left:1276px;top:728px;width:1px;height:16px;background:#b3a985"></div>
<div class="b" style="left:1381px;top:728px;width:1px;height:16px;background:#b3a985"></div>
<div class="b" style="left:1486px;top:728px;width:1px;height:16px;background:#b3a985"></div>
<div class="t" style="left:437px;top:729px;width:102px;text-align:right;font-size:11px;line-height:15px;font-weight:bold;color:#000">27,000</div>
<div class="t" style="left:647px;top:729px;width:102px;text-align:right;font-size:11px;line-height:15px;font-weight:bold;color:#000">27,000</div>
<div class="b" style="left:79px;top:743px;width:1408px;height:16px;background:#fff"></div>
<div class="b" style="left:79px;top:743px;width:1408px;height:1px;background:#b3a985"></div>
<div class="b" style="left:79px;top:758px;width:1408px;height:1px;background:#b3a985"></div>
<div class="b" style="left:79px;top:743px;width:1px;height:16px;background:#b3a985"></div>
<div class="b" style="left:436px;top:743px;width:1px;height:16px;background:#b3a985"></div>
<div class="b" style="left:541px;top:743px;width:1px;height:16px;background:#b3a985"></div>
<div class="b" style="left:646px;top:743px;width:1px;height:16px;background:#b3a985"></div>
<div class="b" style="left:751px;top:743px;width:1px;height:16px;background:#b3a985"></div>
<div class="b" style="left:856px;top:743px;width:1px;height:16px;background:#b3a985"></div>
<div class="b" style="left:961px;top:743px;width:1px;height:16px;background:#b3a985"></div>
<div class="b" style="left:1066px;top:743px;width:1px;height:16px;background:#b3a985"></div>
<div class="b" style="left:1171px;top:743px;width:1px;height:16px;background:#b3a985"></div>
<div class="b" style="left:1276px;top:743px;width:1px;height:16px;background:#b3a985"></div>
<div class="b" style="left:1381px;top:743px;width:1px;height:16px;background:#b3a985"></div>
<div class="b" style="left:1486px;top:743px;width:1px;height:16px;background:#b3a985"></div>
<div class="t" style="left:437px;top:744px;width:102px;text-align:right;font-size:11px;line-height:15px;color:#000">27,000</div>
<div class="t" style="left:647px;top:744px;width:102px;text-align:right;font-size:11px;line-height:15px;color:#000">27,000</div>
<div class="b" style="left:79px;top:758px;width:1408px;height:16px;background:#fff"></div>
<div class="b" style="left:79px;top:758px;width:1408px;height:1px;background:#b3a985"></div>
<div class="b" style="left:79px;top:773px;width:1408px;height:1px;background:#b3a985"></div>
<div class="b" style="left:79px;top:758px;width:1px;height:16px;background:#b3a985"></div>
<div class="b" style="left:436px;top:758px;width:1px;height:16px;background:#b3a985"></div>
<div class="b" style="left:541px;top:758px;width:1px;height:16px;background:#b3a985"></div>
<div class="b" style="left:646px;top:758px;width:1px;height:16px;background:#b3a985"></div>
<div class="b" style="left:751px;top:758px;width:1px;height:16px;background:#b3a985"></div>
<div class="b" style="left:856px;top:758px;width:1px;height:16px;background:#b3a985"></div>
<div class="b" style="left:961px;top:758px;width:1px;height:16px;background:#b3a985"></div>
<div class="b" style="left:1066px;top:758px;width:1px;height:16px;background:#b3a985"></div>
<div class="b" style="left:1171px;top:758px;width:1px;height:16px;background:#b3a985"></div>
<div class="b" style="left:1276px;top:758px;width:1px;height:16px;background:#b3a985"></div>
<div class="b" style="left:1381px;top:758px;width:1px;height:16px;background:#b3a985"></div>
<div class="b" style="left:1486px;top:758px;width:1px;height:16px;background:#b3a985"></div>
<div class="t" style="left:89px;top:759px;font-size:11px;line-height:15px;font-weight:bold;color:#000;">Склад №1112</div>
<div class="t" style="left:437px;top:759px;width:102px;text-align:right;font-size:11px;line-height:15px;font-weight:bold;color:#000">239,000</div>
<div class="t" style="left:542px;top:759px;width:102px;text-align:right;font-size:11px;line-height:15px;font-weight:bold;color:#000">81,000</div>
<div class="t" style="left:647px;top:759px;width:102px;text-align:right;font-size:11px;line-height:15px;font-weight:bold;color:#000">158,000</div>
<div class="t" style="left:1067px;top:759px;width:102px;text-align:right;font-size:11px;line-height:15px;font-weight:bold;color:#000">31,000</div>
<div class="t" style="left:1277px;top:759px;width:102px;text-align:right;font-size:11px;line-height:15px;font-weight:bold;color:#000">31,000</div>
<div class="t" style="left:1382px;top:759px;width:102px;text-align:right;font-size:11px;line-height:15px;font-weight:bold;color:#000">31,000</div>
<div class="b" style="left:79px;top:773px;width:1408px;height:16px;background:#fff"></div>
<div class="b" style="left:79px;top:773px;width:1408px;height:1px;background:#b3a985"></div>
<div class="b" style="left:79px;top:788px;width:1408px;height:1px;background:#b3a985"></div>
<div class="b" style="left:79px;top:773px;width:1px;height:16px;background:#b3a985"></div>
<div class="b" style="left:436px;top:773px;width:1px;height:16px;background:#b3a985"></div>
<div class="b" style="left:541px;top:773px;width:1px;height:16px;background:#b3a985"></div>
<div class="b" style="left:646px;top:773px;width:1px;height:16px;background:#b3a985"></div>
<div class="b" style="left:751px;top:773px;width:1px;height:16px;background:#b3a985"></div>
<div class="b" style="left:856px;top:773px;width:1px;height:16px;background:#b3a985"></div>
<div class="b" style="left:961px;top:773px;width:1px;height:16px;background:#b3a985"></div>
<div class="b" style="left:1066px;top:773px;width:1px;height:16px;background:#b3a985"></div>
<div class="b" style="left:1171px;top:773px;width:1px;height:16px;background:#b3a985"></div>
<div class="b" style="left:1276px;top:773px;width:1px;height:16px;background:#b3a985"></div>
<div class="b" style="left:1381px;top:773px;width:1px;height:16px;background:#b3a985"></div>
<div class="b" style="left:1486px;top:773px;width:1px;height:16px;background:#b3a985"></div>
<div class="t" style="left:437px;top:774px;width:102px;text-align:right;font-size:11px;line-height:15px;font-weight:bold;color:#000">239,000</div>
<div class="t" style="left:542px;top:774px;width:102px;text-align:right;font-size:11px;line-height:15px;font-weight:bold;color:#000">81,000</div>
<div class="t" style="left:647px;top:774px;width:102px;text-align:right;font-size:11px;line-height:15px;font-weight:bold;color:#000">158,000</div>
<div class="b" style="left:79px;top:788px;width:1408px;height:16px;background:#fff"></div>
<div class="b" style="left:79px;top:788px;width:1408px;height:1px;background:#b3a985"></div>
<div class="b" style="left:79px;top:803px;width:1408px;height:1px;background:#b3a985"></div>
<div class="b" style="left:79px;top:788px;width:1px;height:16px;background:#b3a985"></div>
<div class="b" style="left:436px;top:788px;width:1px;height:16px;background:#b3a985"></div>
<div class="b" style="left:541px;top:788px;width:1px;height:16px;background:#b3a985"></div>
<div class="b" style="left:646px;top:788px;width:1px;height:16px;background:#b3a985"></div>
<div class="b" style="left:751px;top:788px;width:1px;height:16px;background:#b3a985"></div>
<div class="b" style="left:856px;top:788px;width:1px;height:16px;background:#b3a985"></div>
<div class="b" style="left:961px;top:788px;width:1px;height:16px;background:#b3a985"></div>
<div class="b" style="left:1066px;top:788px;width:1px;height:16px;background:#b3a985"></div>
<div class="b" style="left:1171px;top:788px;width:1px;height:16px;background:#b3a985"></div>
<div class="b" style="left:1276px;top:788px;width:1px;height:16px;background:#b3a985"></div>
<div class="b" style="left:1381px;top:788px;width:1px;height:16px;background:#b3a985"></div>
<div class="b" style="left:1486px;top:788px;width:1px;height:16px;background:#b3a985"></div>
<div class="t" style="left:437px;top:789px;width:102px;text-align:right;font-size:11px;line-height:15px;color:#000">239,000</div>
<div class="t" style="left:647px;top:789px;width:102px;text-align:right;font-size:11px;line-height:15px;color:#000">239,000</div>
<div class="b" style="left:79px;top:803px;width:1408px;height:16px;background:#fff"></div>
<div class="b" style="left:79px;top:803px;width:1408px;height:1px;background:#b3a985"></div>
<div class="b" style="left:79px;top:818px;width:1408px;height:1px;background:#b3a985"></div>
<div class="b" style="left:79px;top:803px;width:1px;height:16px;background:#b3a985"></div>
<div class="b" style="left:436px;top:803px;width:1px;height:16px;background:#b3a985"></div>
<div class="b" style="left:541px;top:803px;width:1px;height:16px;background:#b3a985"></div>
<div class="b" style="left:646px;top:803px;width:1px;height:16px;background:#b3a985"></div>
<div class="b" style="left:751px;top:803px;width:1px;height:16px;background:#b3a985"></div>
<div class="b" style="left:856px;top:803px;width:1px;height:16px;background:#b3a985"></div>
<div class="b" style="left:961px;top:803px;width:1px;height:16px;background:#b3a985"></div>
<div class="b" style="left:1066px;top:803px;width:1px;height:16px;background:#b3a985"></div>
<div class="b" style="left:1171px;top:803px;width:1px;height:16px;background:#b3a985"></div>
<div class="b" style="left:1276px;top:803px;width:1px;height:16px;background:#b3a985"></div>
<div class="b" style="left:1381px;top:803px;width:1px;height:16px;background:#b3a985"></div>
<div class="b" style="left:1486px;top:803px;width:1px;height:16px;background:#b3a985"></div>
<div class="t" style="left:103px;top:804px;font-size:11px;line-height:15px;color:#000;">Заказ покупателя АГ-00001027 от 13.12.2022 14:22:31</div>
<div class="t" style="left:542px;top:804px;width:102px;text-align:right;font-size:11px;line-height:15px;color:#000">31,000</div>
<div class="t" style="left:647px;top:804px;width:102px;text-align:right;font-size:11px;line-height:15px;color:#ff0000">-31,000</div>
<div class="b" style="left:79px;top:818px;width:1408px;height:16px;background:#fff"></div>
<div class="b" style="left:79px;top:818px;width:1408px;height:1px;background:#b3a985"></div>
<div class="b" style="left:79px;top:833px;width:1408px;height:1px;background:#b3a985"></div>
<div class="b" style="left:79px;top:818px;width:1px;height:16px;background:#b3a985"></div>
<div class="b" style="left:436px;top:818px;width:1px;height:16px;background:#b3a985"></div>
<div class="b" style="left:541px;top:818px;width:1px;height:16px;background:#b3a985"></div>
<div class="b" style="left:646px;top:818px;width:1px;height:16px;background:#b3a985"></div>
<div class="b" style="left:751px;top:818px;width:1px;height:16px;background:#b3a985"></div>
<div class="b" style="left:856px;top:818px;width:1px;height:16px;background:#b3a985"></div>
<div class="b" style="left:961px;top:818px;width:1px;height:16px;background:#b3a985"></div>
<div class="b" style="left:1066px;top:818px;width:1px;height:16px;background:#b3a985"></div>
<div class="b" style="left:1171px;top:818px;width:1px;height:16px;background:#b3a985"></div>
<div class="b" style="left:1276px;top:818px;width:1px;height:16px;background:#b3a985"></div>
<div class="b" style="left:1381px;top:818px;width:1px;height:16px;background:#b3a985"></div>
<div class="b" style="left:1486px;top:818px;width:1px;height:16px;background:#b3a985"></div>
<div class="t" style="left:103px;top:819px;font-size:11px;line-height:15px;color:#000;">Заказ покупателя АГ-00000006 от 12.01.2023 12:09:06</div>
<div class="t" style="left:542px;top:819px;width:102px;text-align:right;font-size:11px;line-height:15px;color:#000">50,000</div>
<div class="t" style="left:647px;top:819px;width:102px;text-align:right;font-size:11px;line-height:15px;color:#ff0000">-50,000</div>
<div class="b" style="left:79px;top:833px;width:1408px;height:16px;background:#fff"></div>
<div class="b" style="left:79px;top:833px;width:1408px;height:1px;background:#b3a985"></div>
<div class="b" style="left:79px;top:848px;width:1408px;height:1px;background:#b3a985"></div>
<div class="b" style="left:79px;top:833px;width:1px;height:16px;background:#b3a985"></div>
<div class="b" style="left:436px;top:833px;width:1px;height:16px;background:#b3a985"></div>
<div class="b" style="left:541px;top:833px;width:1px;height:16px;background:#b3a985"></div>
<div class="b" style="left:646px;top:833px;width:1px;height:16px;background:#b3a985"></div>
<div class="b" style="left:751px;top:833px;width:1px;height:16px;background:#b3a985"></div>
<div class="b" style="left:856px;top:833px;width:1px;height:16px;background:#b3a985"></div>
<div class="b" style="left:961px;top:833px;width:1px;height:16px;background:#b3a985"></div>
<div class="b" style="left:1066px;top:833px;width:1px;height:16px;background:#b3a985"></div>
<div class="b" style="left:1171px;top:833px;width:1px;height:16px;background:#b3a985"></div>
<div class="b" style="left:1276px;top:833px;width:1px;height:16px;background:#b3a985"></div>
<div class="b" style="left:1381px;top:833px;width:1px;height:16px;background:#b3a985"></div>
<div class="b" style="left:1486px;top:833px;width:1px;height:16px;background:#b3a985"></div>
<div class="t" style="left:96px;top:834px;font-size:11px;line-height:15px;font-weight:bold;color:#000;">Контрагент №201</div>
<div class="t" style="left:1067px;top:834px;width:102px;text-align:right;font-size:11px;line-height:15px;font-weight:bold;color:#000">31,000</div>
<div class="t" style="left:1277px;top:834px;width:102px;text-align:right;font-size:11px;line-height:15px;font-weight:bold;color:#000">31,000</div>
<div class="t" style="left:1382px;top:834px;width:102px;text-align:right;font-size:11px;line-height:15px;font-weight:bold;color:#000">31,000</div>
<div class="b" style="left:79px;top:848px;width:1408px;height:16px;background:#fff"></div>
<div class="b" style="left:79px;top:848px;width:1408px;height:1px;background:#b3a985"></div>
<div class="b" style="left:79px;top:863px;width:1408px;height:1px;background:#b3a985"></div>
<div class="b" style="left:79px;top:848px;width:1px;height:16px;background:#b3a985"></div>
<div class="b" style="left:436px;top:848px;width:1px;height:16px;background:#b3a985"></div>
<div class="b" style="left:541px;top:848px;width:1px;height:16px;background:#b3a985"></div>
<div class="b" style="left:646px;top:848px;width:1px;height:16px;background:#b3a985"></div>
<div class="b" style="left:751px;top:848px;width:1px;height:16px;background:#b3a985"></div>
<div class="b" style="left:856px;top:848px;width:1px;height:16px;background:#b3a985"></div>
<div class="b" style="left:961px;top:848px;width:1px;height:16px;background:#b3a985"></div>
<div class="b" style="left:1066px;top:848px;width:1px;height:16px;background:#b3a985"></div>
<div class="b" style="left:1171px;top:848px;width:1px;height:16px;background:#b3a985"></div>
<div class="b" style="left:1276px;top:848px;width:1px;height:16px;background:#b3a985"></div>
<div class="b" style="left:1381px;top:848px;width:1px;height:16px;background:#b3a985"></div>
<div class="b" style="left:1486px;top:848px;width:1px;height:16px;background:#b3a985"></div>
<div class="t" style="left:103px;top:849px;font-size:11px;line-height:15px;color:#000;">Спецификация 00000001134 от 09.12.2022 11:16:27</div>
<div class="t" style="left:1067px;top:849px;width:102px;text-align:right;font-size:11px;line-height:15px;color:#000">31,000</div>
<div class="t" style="left:1277px;top:849px;width:102px;text-align:right;font-size:11px;line-height:15px;color:#000">31,000</div>
<div class="t" style="left:1382px;top:849px;width:102px;text-align:right;font-size:11px;line-height:15px;color:#000">31,000</div>
<div class="b" style="left:79px;top:863px;width:1408px;height:16px;background:#fff"></div>
<div class="b" style="left:79px;top:863px;width:1408px;height:1px;background:#b3a985"></div>
<div class="b" style="left:79px;top:878px;width:1408px;height:1px;background:#b3a985"></div>
<div class="b" style="left:79px;top:863px;width:1px;height:16px;background:#b3a985"></div>
<div class="b" style="left:436px;top:863px;width:1px;height:16px;background:#b3a985"></div>
<div class="b" style="left:541px;top:863px;width:1px;height:16px;background:#b3a985"></div>
<div class="b" style="left:646px;top:863px;width:1px;height:16px;background:#b3a985"></div>
<div class="b" style="left:751px;top:863px;width:1px;height:16px;background:#b3a985"></div>
<div class="b" style="left:856px;top:863px;width:1px;height:16px;background:#b3a985"></div>
<div class="b" style="left:961px;top:863px;width:1px;height:16px;background:#b3a985"></div>
<div class="b" style="left:1066px;top:863px;width:1px;height:16px;background:#b3a985"></div>
<div class="b" style="left:1171px;top:863px;width:1px;height:16px;background:#b3a985"></div>
<div class="b" style="left:1276px;top:863px;width:1px;height:16px;background:#b3a985"></div>
<div class="b" style="left:1381px;top:863px;width:1px;height:16px;background:#b3a985"></div>
<div class="b" style="left:1486px;top:863px;width:1px;height:16px;background:#b3a985"></div>
<div class="t" style="left:89px;top:864px;font-size:11px;line-height:15px;font-weight:bold;color:#000;">Склад №1120</div>
<div class="t" style="left:437px;top:864px;width:102px;text-align:right;font-size:11px;line-height:15px;font-weight:bold;color:#000">36,000</div>
<div class="t" style="left:647px;top:864px;width:102px;text-align:right;font-size:11px;line-height:15px;font-weight:bold;color:#000">36,000</div>
<div class="t" style="left:1172px;top:864px;width:102px;text-align:right;font-size:11px;line-height:15px;font-weight:bold;color:#000">50,000</div>
<div class="b" style="left:79px;top:878px;width:1408px;height:16px;background:#fff"></div>
<div class="b" style="left:79px;top:878px;width:1408px;height:1px;background:#b3a985"></div>
<div class="b" style="left:79px;top:893px;width:1408px;height:1px;background:#b3a985"></div>
<div class="b" style="left:79px;top:878px;width:1px;height:16px;background:#b3a985"></div>
<div class="b" style="left:436px;top:878px;width:1px;height:16px;background:#b3a985"></div>
<div class="b" style="left:541px;top:878px;width:1px;height:16px;background:#b3a985"></div>
<div class="b" style="left:646px;top:878px;width:1px;height:16px;background:#b3a985"></div>
<div class="b" style="left:751px;top:878px;width:1px;height:16px;background:#b3a985"></div>
<div class="b" style="left:856px;top:878px;width:1px;height:16px;background:#b3a985"></div>
<div class="b" style="left:961px;top:878px;width:1px;height:16px;background:#b3a985"></div>
<div class="b" style="left:1066px;top:878px;width:1px;height:16px;background:#b3a985"></div>
<div class="b" style="left:1171px;top:878px;width:1px;height:16px;background:#b3a985"></div>
<div class="b" style="left:1276px;top:878px;width:1px;height:16px;background:#b3a985"></div>
<div class="b" style="left:1381px;top:878px;width:1px;height:16px;background:#b3a985"></div>
<div class="b" style="left:1486px;top:878px;width:1px;height:16px;background:#b3a985"></div>
<div class="t" style="left:437px;top:879px;width:102px;text-align:right;font-size:11px;line-height:15px;font-weight:bold;color:#000">36,000</div>
<div class="t" style="left:647px;top:879px;width:102px;text-align:right;font-size:11px;line-height:15px;font-weight:bold;color:#000">36,000</div>
<div class="b" style="left:79px;top:893px;width:1408px;height:16px;background:#fff"></div>
<div class="b" style="left:79px;top:893px;width:1408px;height:1px;background:#b3a985"></div>
<div class="b" style="left:79px;top:908px;width:1408px;height:1px;background:#b3a985"></div>
<div class="b" style="left:79px;top:893px;width:1px;height:16px;background:#b3a985"></div>
<div class="b" style="left:436px;top:893px;width:1px;height:16px;background:#b3a985"></div>
<div class="b" style="left:541px;top:893px;width:1px;height:16px;background:#b3a985"></div>
<div class="b" style="left:646px;top:893px;width:1px;height:16px;background:#b3a985"></div>
<div class="b" style="left:751px;top:893px;width:1px;height:16px;background:#b3a985"></div>
<div class="b" style="left:856px;top:893px;width:1px;height:16px;background:#b3a985"></div>
<div class="b" style="left:961px;top:893px;width:1px;height:16px;background:#b3a985"></div>
<div class="b" style="left:1066px;top:893px;width:1px;height:16px;background:#b3a985"></div>
<div class="b" style="left:1171px;top:893px;width:1px;height:16px;background:#b3a985"></div>
<div class="b" style="left:1276px;top:893px;width:1px;height:16px;background:#b3a985"></div>
<div class="b" style="left:1381px;top:893px;width:1px;height:16px;background:#b3a985"></div>
<div class="b" style="left:1486px;top:893px;width:1px;height:16px;background:#b3a985"></div>
<div class="t" style="left:437px;top:894px;width:102px;text-align:right;font-size:11px;line-height:15px;color:#000">36,000</div>
<div class="t" style="left:647px;top:894px;width:102px;text-align:right;font-size:11px;line-height:15px;color:#000">36,000</div>
<div class="b" style="left:79px;top:908px;width:1408px;height:16px;background:#fff"></div>
<div class="b" style="left:79px;top:908px;width:1408px;height:1px;background:#b3a985"></div>
<div class="b" style="left:79px;top:923px;width:1408px;height:1px;background:#b3a985"></div>
<div class="b" style="left:79px;top:908px;width:1px;height:16px;background:#b3a985"></div>
<div class="b" style="left:436px;top:908px;width:1px;height:16px;background:#b3a985"></div>
<div class="b" style="left:541px;top:908px;width:1px;height:16px;background:#b3a985"></div>
<div class="b" style="left:646px;top:908px;width:1px;height:16px;background:#b3a985"></div>
<div class="b" style="left:751px;top:908px;width:1px;height:16px;background:#b3a985"></div>
<div class="b" style="left:856px;top:908px;width:1px;height:16px;background:#b3a985"></div>
<div class="b" style="left:961px;top:908px;width:1px;height:16px;background:#b3a985"></div>
<div class="b" style="left:1066px;top:908px;width:1px;height:16px;background:#b3a985"></div>
<div class="b" style="left:1171px;top:908px;width:1px;height:16px;background:#b3a985"></div>
<div class="b" style="left:1276px;top:908px;width:1px;height:16px;background:#b3a985"></div>
<div class="b" style="left:1381px;top:908px;width:1px;height:16px;background:#b3a985"></div>
<div class="b" style="left:1486px;top:908px;width:1px;height:16px;background:#b3a985"></div>
<div class="t" style="left:96px;top:909px;font-size:11px;line-height:15px;font-weight:bold;color:#000;">Контрагент №10324</div>
<div class="t" style="left:1172px;top:909px;width:102px;text-align:right;font-size:11px;line-height:15px;font-weight:bold;color:#000">50,000</div>
<div class="b" style="left:79px;top:923px;width:1408px;height:16px;background:#fff"></div>
<div class="b" style="left:79px;top:923px;width:1408px;height:1px;background:#b3a985"></div>
<div class="b" style="left:79px;top:938px;width:1408px;height:1px;background:#b3a985"></div>
<div class="b" style="left:79px;top:923px;width:1px;height:16px;background:#b3a985"></div>
<div class="b" style="left:436px;top:923px;width:1px;height:16px;background:#b3a985"></div>
<div class="b" style="left:541px;top:923px;width:1px;height:16px;background:#b3a985"></div>
<div class="b" style="left:646px;top:923px;width:1px;height:16px;background:#b3a985"></div>
<div class="b" style="left:751px;top:923px;width:1px;height:16px;background:#b3a985"></div>
<div class="b" style="left:856px;top:923px;width:1px;height:16px;background:#b3a985"></div>
<div class="b" style="left:961px;top:923px;width:1px;height:16px;background:#b3a985"></div>
<div class="b" style="left:1066px;top:923px;width:1px;height:16px;background:#b3a985"></div>
<div class="b" style="left:1171px;top:923px;width:1px;height:16px;background:#b3a985"></div>
<div class="b" style="left:1276px;top:923px;width:1px;height:16px;background:#b3a985"></div>
<div class="b" style="left:1381px;top:923px;width:1px;height:16px;background:#b3a985"></div>
<div class="b" style="left:1486px;top:923px;width:1px;height:16px;background:#b3a985"></div>
<div class="t" style="left:103px;top:924px;font-size:11px;line-height:15px;color:#000;">Спецификация 00000001136 от 13.12.2022 14:38:57</div>
<div class="t" style="left:1172px;top:924px;width:102px;text-align:right;font-size:11px;line-height:15px;color:#000">50,000</div>
<div class="b" style="left:79px;top:945px;width:1408px;height:16px;background:#f3efdb"></div>
<div class="b" style="left:79px;top:945px;width:1408px;height:1px;background:#b3a985"></div>
<div class="b" style="left:79px;top:960px;width:1408px;height:1px;background:#b3a985"></div>
<div class="b" style="left:79px;top:945px;width:1px;height:16px;background:#b3a985"></div>
<div class="b" style="left:436px;top:945px;width:1px;height:16px;background:#b3a985"></div>
<div class="b" style="left:541px;top:945px;width:1px;height:16px;background:#b3a985"></div>
<div class="b" style="left:646px;top:945px;width:1px;height:16px;background:#b3a985"></div>
<div class="b" style="left:751px;top:945px;width:1px;height:16px;background:#b3a985"></div>
<div class="b" style="left:856px;top:945px;width:1px;height:16px;background:#b3a985"></div>
<div class="b" style="left:961px;top:945px;width:1px;height:16px;background:#b3a985"></div>
<div class="b" style="left:1066px;top:945px;width:1px;height:16px;background:#b3a985"></div>
<div class="b" style="left:1171px;top:945px;width:1px;height:16px;background:#b3a985"></div>
<div class="b" style="left:1276px;top:945px;width:1px;height:16px;background:#b3a985"></div>
<div class="b" style="left:1381px;top:945px;width:1px;height:16px;background:#b3a985"></div>
<div class="b" style="left:1486px;top:945px;width:1px;height:16px;background:#b3a985"></div>
<div class="t" style="left:82px;top:946px;font-size:11px;line-height:15px;font-weight:bold;color:#4e3c10;">Итог</div>
<div class="t" style="left:437px;top:946px;width:102px;text-align:right;font-size:11px;line-height:15px;font-weight:bold;color:#4e3c10">796,000</div>
<div class="t" style="left:542px;top:946px;width:102px;text-align:right;font-size:11px;line-height:15px;font-weight:bold;color:#4e3c10">81,000</div>
<div class="t" style="left:647px;top:946px;width:102px;text-align:right;font-size:11px;line-height:15px;font-weight:bold;color:#4e3c10">715,000</div>
<div class="t" style="left:752px;top:946px;width:102px;text-align:right;font-size:11px;line-height:15px;font-weight:bold;color:#4e3c10">320,000</div>
<div class="t" style="left:857px;top:946px;width:102px;text-align:right;font-size:11px;line-height:15px;font-weight:bold;color:#4e3c10">572,000</div>
<div class="t" style="left:962px;top:946px;width:102px;text-align:right;font-size:11px;line-height:15px;font-weight:bold;color:#4e3c10">510,000</div>
<div class="t" style="left:1067px;top:946px;width:102px;text-align:right;font-size:11px;line-height:15px;font-weight:bold;color:#4e3c10">112,000</div>
<div class="t" style="left:1172px;top:946px;width:102px;text-align:right;font-size:11px;line-height:15px;font-weight:bold;color:#4e3c10">50,000</div>
<div class="t" style="left:1277px;top:946px;width:102px;text-align:right;font-size:11px;line-height:15px;font-weight:bold;color:#4e3c10">53,500</div>
<div class="t" style="left:1382px;top:946px;width:102px;text-align:right;font-size:11px;line-height:15px;font-weight:bold;color:#4e3c10">93,500</div>
<div class="b" style="left:19px;top:310px;width:1px;height:628px;background:#b3a985"></div>
<div class="b" style="left:19px;top:938px;width:5px;height:1px;background:#b3a985"></div>
<div class="b" style="left:14px;top:299px;width:11px;height:11px;border:1px solid #b0a680;border-radius:2px;background:linear-gradient(#fffef8,#f4f0e0)"></div>
<div class="b" style="left:16px;top:304px;width:7px;height:1px;background:#3a2a0a"></div>
<div class="b" style="left:32px;top:325px;width:1px;height:31px;background:#b3a985"></div>
<div class="b" style="left:32px;top:356px;width:5px;height:1px;background:#b3a985"></div>
<div class="b" style="left:27px;top:314px;width:11px;height:11px;border:1px solid #b0a680;border-radius:2px;background:linear-gradient(#fffef8,#f4f0e0)"></div>
<div class="b" style="left:29px;top:319px;width:7px;height:1px;background:#3a2a0a"></div>
<div class="b" style="left:32px;top:370px;width:1px;height:90px;background:#b3a985"></div>
<div class="b" style="left:32px;top:460px;width:5px;height:1px;background:#b3a985"></div>
<div class="b" style="left:27px;top:359px;width:11px;height:11px;border:1px solid #b0a680;border-radius:2px;background:linear-gradient(#fffef8,#f4f0e0)"></div>
<div class="b" style="left:29px;top:364px;width:7px;height:1px;background:#3a2a0a"></div>
<div class="b" style="left:32px;top:474px;width:1px;height:90px;background:#b3a985"></div>
<div class="b" style="left:32px;top:564px;width:5px;height:1px;background:#b3a985"></div>
<div class="b" style="left:27px;top:463px;width:11px;height:11px;border:1px solid #b0a680;border-radius:2px;background:linear-gradient(#fffef8,#f4f0e0)"></div>
<div class="b" style="left:29px;top:468px;width:7px;height:1px;background:#3a2a0a"></div>
<div class="b" style="left:32px;top:578px;width:1px;height:61px;background:#b3a985"></div>
<div class="b" style="left:32px;top:639px;width:5px;height:1px;background:#b3a985"></div>
<div class="b" style="left:27px;top:567px;width:11px;height:11px;border:1px solid #b0a680;border-radius:2px;background:linear-gradient(#fffef8,#f4f0e0)"></div>
<div class="b" style="left:29px;top:572px;width:7px;height:1px;background:#3a2a0a"></div>
<div class="b" style="left:32px;top:653px;width:1px;height:60px;background:#b3a985"></div>
<div class="b" style="left:32px;top:713px;width:5px;height:1px;background:#b3a985"></div>
<div class="b" style="left:27px;top:642px;width:11px;height:11px;border:1px solid #b0a680;border-radius:2px;background:linear-gradient(#fffef8,#f4f0e0)"></div>
<div class="b" style="left:29px;top:647px;width:7px;height:1px;background:#3a2a0a"></div>
<div class="b" style="left:32px;top:727px;width:1px;height:31px;background:#b3a985"></div>
<div class="b" style="left:32px;top:758px;width:5px;height:1px;background:#b3a985"></div>
<div class="b" style="left:27px;top:716px;width:11px;height:11px;border:1px solid #b0a680;border-radius:2px;background:linear-gradient(#fffef8,#f4f0e0)"></div>
<div class="b" style="left:29px;top:721px;width:7px;height:1px;background:#3a2a0a"></div>
<div class="b" style="left:32px;top:772px;width:1px;height:91px;background:#b3a985"></div>
<div class="b" style="left:32px;top:863px;width:5px;height:1px;background:#b3a985"></div>
<div class="b" style="left:27px;top:761px;width:11px;height:11px;border:1px solid #b0a680;border-radius:2px;background:linear-gradient(#fffef8,#f4f0e0)"></div>
<div class="b" style="left:29px;top:766px;width:7px;height:1px;background:#3a2a0a"></div>
<div class="b" style="left:32px;top:877px;width:1px;height:61px;background:#b3a985"></div>
<div class="b" style="left:32px;top:938px;width:5px;height:1px;background:#b3a985"></div>
<div class="b" style="left:27px;top:866px;width:11px;height:11px;border:1px solid #b0a680;border-radius:2px;background:linear-gradient(#fffef8,#f4f0e0)"></div>
<div class="b" style="left:29px;top:871px;width:7px;height:1px;background:#3a2a0a"></div>
<div class="b" style="left:45px;top:340px;width:1px;height:16px;background:#b3a985"></div>
<div class="b" style="left:45px;top:356px;width:5px;height:1px;background:#b3a985"></div>
<div class="b" style="left:40px;top:329px;width:11px;height:11px;border:1px solid #b0a680;border-radius:2px;background:linear-gradient(#fffef8,#f4f0e0)"></div>
<div class="b" style="left:42px;top:334px;width:7px;height:1px;background:#3a2a0a"></div>
<div class="b" style="left:45px;top:385px;width:1px;height:45px;background:#b3a985"></div>
<div class="b" style="left:45px;top:430px;width:5px;height:1px;background:#b3a985"></div>
<div class="b" style="left:40px;top:374px;width:11px;height:11px;border:1px solid #b0a680;border-radius:2px;background:linear-gradient(#fffef8,#f4f0e0)"></div>
<div class="b" style="left:42px;top:379px;width:7px;height:1px;background:#3a2a0a"></div>
<div class="b" style="left:45px;top:444px;width:1px;height:16px;background:#b3a985"></div>
<div class="b" style="left:45px;top:460px;width:5px;height:1px;background:#b3a985"></div>
<div class="b" style="left:40px;top:433px;width:11px;height:11px;border:1px solid #b0a680;border-radius:2px;background:linear-gradient(#fffef8,#f4f0e0)"></div>
<div class="b" style="left:42px;top:438px;width:7px;height:1px;background:#3a2a0a"></div>
<div class="b" style="left:45px;top:489px;width:1px;height:45px;background:#b3a985"></div>
<div class="b" style="left:45px;top:534px;width:5px;height:1px;background:#b3a985"></div>
<div class="b" style="left:40px;top:478px;width:11px;height:11px;border:1px solid #b0a680;border-radius:2px;background:linear-gradient(#fffef8,#f4f0e0)"></div>
<div class="b" style="left:42px;top:483px;width:7px;height:1px;background:#3a2a0a"></div>
<div class="b" style="left:45px;top:548px;width:1px;height:16px;background:#b3a985"></div>
<div class="b" style="left:45px;top:564px;width:5px;height:1px;background:#b3a985"></div>
<div class="b" style="left:40px;top:537px;width:11px;height:11px;border:1px solid #b0a680;border-radius:2px;background:linear-gradient(#fffef8,#f4f0e0)"></div>
<div class="b" style="left:42px;top:542px;width:7px;height:1px;background:#3a2a0a"></div>
<div class="b" style="left:45px;top:593px;width:1px;height:16px;background:#b3a985"></div>
<div class="b" style="left:45px;top:609px;width:5px;height:1px;background:#b3a985"></div>
<div class="b" style="left:40px;top:582px;width:11px;height:11px;border:1px solid #b0a680;border-radius:2px;background:linear-gradient(#fffef8,#f4f0e0)"></div>
<div class="b" style="left:42px;top:587px;width:7px;height:1px;background:#3a2a0a"></div>
<div class="b" style="left:45px;top:623px;width:1px;height:16px;background:#b3a985"></div>
<div class="b" style="left:45px;top:639px;width:5px;height:1px;background:#b3a985"></div>
<div class="b" style="left:40px;top:612px;width:11px;height:11px;border:1px solid #b0a680;border-radius:2px;background:linear-gradient(#fffef8,#f4f0e0)"></div>
<div class="b" style="left:42px;top:617px;width:7px;height:1px;background:#3a2a0a"></div>
<div class="b" style="left:45px;top:668px;width:1px;height:45px;background:#b3a985"></div>
<div class="b" style="left:45px;top:713px;width:5px;height:1px;background:#b3a985"></div>
<div class="b" style="left:40px;top:657px;width:11px;height:11px;border:1px solid #b0a680;border-radius:2px;background:linear-gradient(#fffef8,#f4f0e0)"></div>
<div class="b" style="left:42px;top:662px;width:7px;height:1px;background:#3a2a0a"></div>
<div class="b" style="left:45px;top:742px;width:1px;height:16px;background:#b3a985"></div>
<div class="b" style="left:45px;top:758px;width:5px;height:1px;background:#b3a985"></div>
<div class="b" style="left:40px;top:731px;width:11px;height:11px;border:1px solid #b0a680;border-radius:2px;background:linear-gradient(#fffef8,#f4f0e0)"></div>
<div class="b" style="left:42px;top:736px;width:7px;height:1px;background:#3a2a0a"></div>
<div class="b" style="left:45px;top:787px;width:1px;height:46px;background:#b3a985"></div>
<div class="b" style="left:45px;top:833px;width:5px;height:1px;background:#b3a985"></div>
<div class="b" style="left:40px;top:776px;width:11px;height:11px;border:1px solid #b0a680;border-radius:2px;background:linear-gradient(#fffef8,#f4f0e0)"></div>
<div class="b" style="left:42px;top:781px;width:7px;height:1px;background:#3a2a0a"></div>
<div class="b" style="left:45px;top:847px;width:1px;height:16px;background:#b3a985"></div>
<div class="b" style="left:45px;top:863px;width:5px;height:1px;background:#b3a985"></div>
<div class="b" style="left:40px;top:836px;width:11px;height:11px;border:1px solid #b0a680;border-radius:2px;background:linear-gradient(#fffef8,#f4f0e0)"></div>
<div class="b" style="left:42px;top:841px;width:7px;height:1px;background:#3a2a0a"></div>
<div class="b" style="left:45px;top:892px;width:1px;height:16px;background:#b3a985"></div>
<div class="b" style="left:45px;top:908px;width:5px;height:1px;background:#b3a985"></div>
<div class="b" style="left:40px;top:881px;width:11px;height:11px;border:1px solid #b0a680;border-radius:2px;background:linear-gradient(#fffef8,#f4f0e0)"></div>
<div class="b" style="left:42px;top:886px;width:7px;height:1px;background:#3a2a0a"></div>
<div class="b" style="left:45px;top:922px;width:1px;height:16px;background:#b3a985"></div>
<div class="b" style="left:45px;top:938px;width:5px;height:1px;background:#b3a985"></div>
<div class="b" style="left:40px;top:911px;width:11px;height:11px;border:1px solid #b0a680;border-radius:2px;background:linear-gradient(#fffef8,#f4f0e0)"></div>
<div class="b" style="left:42px;top:916px;width:7px;height:1px;background:#3a2a0a"></div>
<div class="b" style="left:752px;top:231px;width:104px;height:1px;background:#7a6e50"></div>
<div class="b" style="left:748px;top:227px;width:112px;height:738px;border:4px solid #74b6f8;border-radius:2px;box-shadow:0 1px 0 rgba(0,0,0,0.35)"></div>
<div class="b" style="left:1893px;top:229px;width:17px;height:742px;border:1px solid #b5ab82;background:#fbfaf4"></div>
<div class="b" style="left:1894px;top:230px;width:15px;height:20px;background:linear-gradient(90deg,#f6f4ea,#ebe6d0)"></div>
<div class="b" style="left:1894px;top:250px;width:15px;height:1px;background:#b5ab82"></div>
<div class="b" style="left:1894px;top:251px;width:15px;height:564px;background:linear-gradient(90deg,#f7f4e6,#ebe4c6)"></div>
<div class="b" style="left:1894px;top:815px;width:15px;height:1px;background:#b5ab82"></div>
<div class="b" style="left:1894px;top:949px;width:15px;height:1px;background:#b5ab82"></div>
<div class="b" style="left:1894px;top:950px;width:15px;height:20px;background:linear-gradient(90deg,#f6f4ea,#ebe6d0)"></div>
<svg style="left:1897px;top:235px" width="9" height="7" viewBox="0 0 9 7"><path d="M4.5 0 L9 7 H0Z" fill="#c0bcb0"/></svg>
<svg style="left:1897px;top:956px" width="9" height="7" viewBox="0 0 9 7"><path d="M0 0 H9 L4.5 7Z" fill="#707070"/></svg>
<div class="b" style="left:10px;top:970px;width:1900px;height:17px;border:1px solid #b5ab82;background:#fbfaf4"></div>
<div class="b" style="left:11px;top:971px;width:20px;height:15px;background:linear-gradient(#f6f4ea,#ebe6d0)"></div>
<div class="b" style="left:31px;top:971px;width:1px;height:15px;background:#b5ab82"></div>
<div class="b" style="left:32px;top:971px;width:1695px;height:15px;background:linear-gradient(#f7f4e6,#ebe4c6)"></div>
<div class="b" style="left:1727px;top:971px;width:1px;height:15px;background:#b5ab82"></div>
<div class="b" style="left:1872px;top:971px;width:1px;height:15px;background:#b5ab82"></div>
<div class="b" style="left:1873px;top:971px;width:20px;height:15px;background:linear-gradient(#f6f4ea,#ebe6d0)"></div>
<div class="b" style="left:1893px;top:971px;width:1px;height:15px;background:#b5ab82"></div>
<svg style="left:876px;top:975px" width="6" height="6" viewBox="0 0 6 6"><circle cx="3" cy="3" r="2.4" fill="#c8c4b0"/></svg>
<svg style="left:1899px;top:531px" width="6" height="6" viewBox="0 0 6 6"><circle cx="3" cy="3" r="2.4" fill="#c8c4b0"/></svg>
<svg style="left:17px;top:974px" width="7" height="9" viewBox="0 0 7 9"><path d="M7 0 V9 L0 4.5Z" fill="#c0bcb0"/></svg>
<svg style="left:1880px;top:974px" width="7" height="9" viewBox="0 0 7 9"><path d="M0 0 V9 L7 4.5Z" fill="#707070"/></svg>
</body></html>
